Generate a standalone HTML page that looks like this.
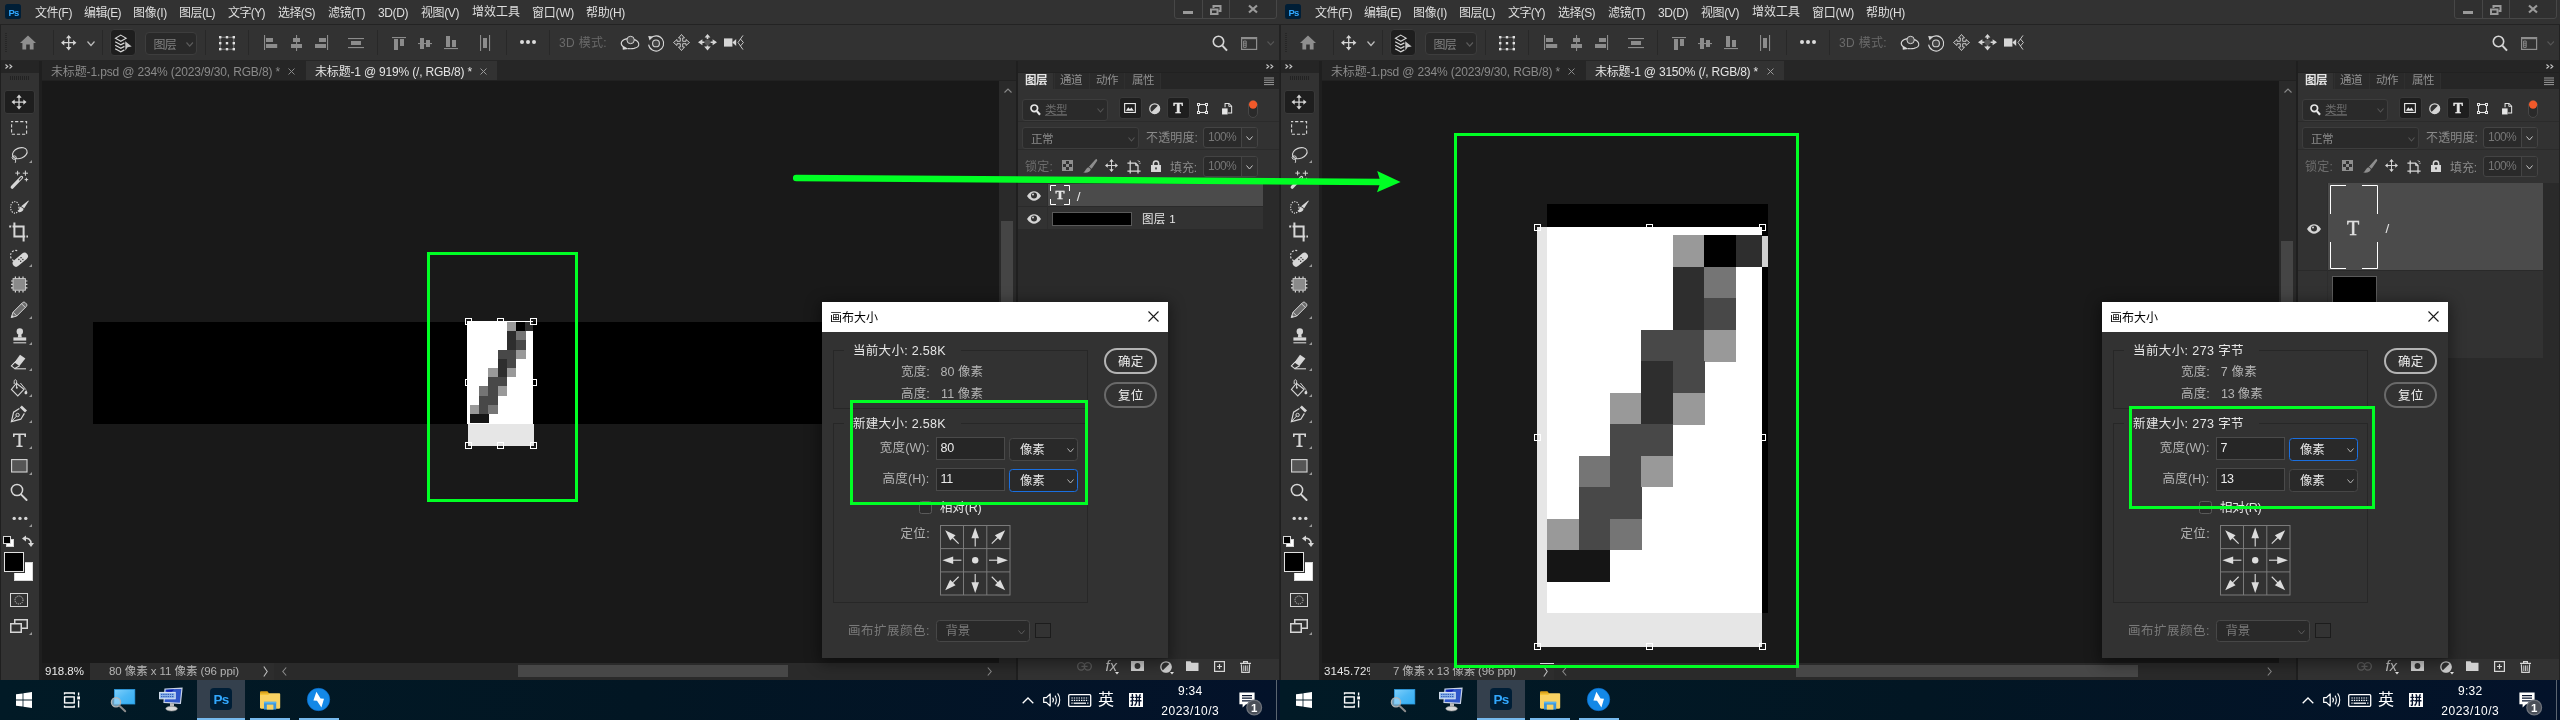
<!DOCTYPE html><html lang="zh-CN"><head><meta charset="utf-8"><title>Photoshop canvas size</title><style>html,body{margin:0;padding:0;background:#191919;}
body{width:2560px;height:720px;position:relative;overflow:hidden;font-family:"Liberation Sans","Noto Sans CJK SC",sans-serif;}
.shot{position:absolute;top:0;width:1280px;height:720px;overflow:hidden;background:#191919;will-change:transform;}
.shot div,.shot svg,.shot span.t,.ov{position:absolute;box-sizing:border-box;}
span.t{white-space:pre;display:block;}
svg{overflow:visible;display:block;}
</style></head><body><div class="shot" style="left:0"><div style="left:93px;top:322px;width:735px;height:101.5px;background:#000;"></div><div style="left:467px;top:321px;width:66px;height:103px;background:#fff;"></div><div style="left:468px;top:423.5px;width:66px;height:22px;background:#e6e6e6;"></div><svg style="left:0px;top:0px;" width="1280" height="720" viewBox="0 0 1280 720"><g shape-rendering="crispEdges"><rect x="506.86" y="322.00" width="9.49" height="9.49" fill="#999"/><rect x="516.05" y="322.00" width="9.49" height="9.49" fill="#000"/><rect x="525.24" y="322.00" width="8.06" height="9.49" fill="#2e2e2e"/><rect x="506.86" y="331.19" width="9.49" height="9.49" fill="#2e2e2e"/><rect x="516.05" y="331.19" width="9.49" height="9.49" fill="#757575"/><rect x="506.86" y="340.38" width="9.49" height="9.49" fill="#2e2e2e"/><rect x="516.05" y="340.38" width="9.49" height="9.49" fill="#484848"/><rect x="497.67" y="349.56" width="9.49" height="9.49" fill="#484848"/><rect x="506.86" y="349.56" width="9.49" height="9.49" fill="#484848"/><rect x="516.05" y="349.56" width="9.49" height="9.49" fill="#999"/><rect x="497.67" y="358.75" width="9.49" height="9.49" fill="#2e2e2e"/><rect x="506.86" y="358.75" width="9.49" height="9.49" fill="#484848"/><rect x="488.48" y="367.94" width="9.49" height="9.49" fill="#999"/><rect x="497.67" y="367.94" width="9.49" height="9.49" fill="#2e2e2e"/><rect x="506.86" y="367.94" width="9.49" height="9.49" fill="#999"/><rect x="488.48" y="377.13" width="9.49" height="9.49" fill="#484848"/><rect x="497.67" y="377.13" width="9.49" height="9.49" fill="#484848"/><rect x="479.30" y="386.32" width="9.49" height="9.49" fill="#757575"/><rect x="488.48" y="386.32" width="9.49" height="9.49" fill="#484848"/><rect x="497.67" y="386.32" width="9.49" height="9.49" fill="#999"/><rect x="479.30" y="395.50" width="9.49" height="9.49" fill="#484848"/><rect x="488.48" y="395.50" width="9.49" height="9.49" fill="#484848"/><rect x="470.11" y="404.69" width="9.49" height="9.49" fill="#999"/><rect x="479.30" y="404.69" width="9.49" height="9.49" fill="#484848"/><rect x="488.48" y="404.69" width="9.49" height="9.49" fill="#757575"/><rect x="470.11" y="413.88" width="9.49" height="9.49" fill="#151515"/><rect x="479.30" y="413.88" width="9.49" height="9.49" fill="#151515"/></g></svg><div style="left:465px;top:318px;width:7px;height:7px;border:1px solid #fff;background:transparent;"></div><div style="left:497px;top:318px;width:7px;height:7px;border:1px solid #fff;background:transparent;"></div><div style="left:530px;top:318px;width:7px;height:7px;border:1px solid #fff;background:transparent;"></div><div style="left:465px;top:379px;width:7px;height:7px;border:1px solid #fff;background:transparent;"></div><div style="left:530px;top:379px;width:7px;height:7px;border:1px solid #fff;background:transparent;"></div><div style="left:465px;top:442px;width:7px;height:7px;border:1px solid #fff;background:transparent;"></div><div style="left:497px;top:442px;width:7px;height:7px;border:1px solid #fff;background:transparent;"></div><div style="left:530px;top:442px;width:7px;height:7px;border:1px solid #fff;background:transparent;"></div><div style="left:0px;top:0px;width:1280px;height:24px;background:#323232;"></div><div style="left:0px;top:24px;width:1280px;height:1px;background:#232323;"></div><div style="left:5px;top:4px;width:16px;height:15px;background:#001e36;border-radius:2.5px;"></div><span id="t1" class="t" style="left:8.5px;top:5px;font-size:9.5px;line-height:15px;color:#31a8ff;letter-spacing:-0.812px;font-weight:bold;">Ps</span><span id="t2" class="t" style="left:35px;top:4px;font-size:12px;line-height:19px;color:#dedede;letter-spacing:-0.466px;">文件(F)</span><span id="t3" class="t" style="left:84px;top:4px;font-size:12px;line-height:19px;color:#dedede;letter-spacing:-0.600px;">编辑(E)</span><span id="t4" class="t" style="left:133px;top:4px;font-size:12px;line-height:19px;color:#dedede;letter-spacing:-0.266px;">图像(I)</span><span id="t5" class="t" style="left:179px;top:4px;font-size:12px;line-height:19px;color:#dedede;letter-spacing:-0.534px;">图层(L)</span><span id="t6" class="t" style="left:228px;top:4px;font-size:12px;line-height:19px;color:#dedede;letter-spacing:-0.600px;">文字(Y)</span><span id="t7" class="t" style="left:278px;top:4px;font-size:12px;line-height:19px;color:#dedede;letter-spacing:-0.600px;">选择(S)</span><span id="t8" class="t" style="left:328px;top:4px;font-size:12px;line-height:19px;color:#dedede;letter-spacing:-0.466px;">滤镜(T)</span><span id="t9" class="t" style="left:378px;top:4px;font-size:12px;line-height:19px;color:#dedede;letter-spacing:-0.400px;">3D(D)</span><span id="t10" class="t" style="left:421px;top:4px;font-size:12px;line-height:19px;color:#dedede;letter-spacing:-0.400px;">视图(V)</span><span id="t11" class="t" style="left:472px;top:3px;font-size:12px;line-height:19px;color:#dedede;letter-spacing:-0.004px;">增效工具</span><span id="t12" class="t" style="left:532px;top:4px;font-size:12px;line-height:19px;color:#dedede;letter-spacing:-0.266px;">窗口(W)</span><span id="t13" class="t" style="left:586px;top:4px;font-size:12px;line-height:19px;color:#dedede;letter-spacing:-0.334px;">帮助(H)</span><div style="left:1174px;top:-1px;width:103px;height:20px;border:1px solid #474747;border-radius:0 0 3px 3px;background:#303030;"></div><div style="left:1202px;top:0px;width:1px;height:18px;background:#474747;"></div><div style="left:1229px;top:0px;width:1px;height:18px;background:#474747;"></div><div style="left:1183px;top:11px;width:10px;height:3px;background:#9a9a9a;"></div><svg style="left:1210px;top:5px;" width="12" height="10" viewBox="0 0 12 10"><path d="M3.5 3V1h7v5h-2" fill="none" stroke="#9a9a9a" stroke-width="2"/><rect x="1" y="4.5" width="6.5" height="4.5" fill="none" stroke="#9a9a9a" stroke-width="2"/></svg><svg style="left:1248px;top:5px;" width="10" height="8" viewBox="0 0 10 8"><path d="M1 0.5L9 7.5M9 0.5L1 7.5" stroke="#9a9a9a" stroke-width="2.2" fill="none"/></svg><div style="left:0px;top:25px;width:1280px;height:35px;background:#323232;"></div><div style="left:0px;top:60px;width:1280px;height:1px;background:#262626;"></div><div style="left:0px;top:25px;width:1px;height:36px;background:#222;"></div><div style="left:5px;top:33px;width:2px;height:20px;background:repeating-linear-gradient(#262626 0 1px,transparent 1px 2px);"></div><svg style="left:20px;top:35.2px;" width="16.2" height="15" viewBox="0 0 16.2 15"><path d="M8 0.5 L16 8 H13.6 V14.5 H9.8 V9.6 H6.2 V14.5 H2.4 V8 H0 Z" fill="#8e8e8e"/></svg><div style="left:53px;top:30px;width:1px;height:25px;background:#282828;"></div><svg style="left:60.9px;top:35px;" width="15.4" height="15.4" viewBox="0 0 16 16"><g fill="none" stroke="#d6d6d6" stroke-width="1.3"><path d="M8 1.5V14.5M1.5 8H14.5"/></g><path d="M8 0L10.8 3.4H5.2ZM8 16L10.8 12.6H5.2ZM0 8L3.4 5.2V10.8ZM16 8L12.6 5.2V10.8Z" fill="#d6d6d6"/></svg><svg style="left:87px;top:41px;" width="8" height="5" viewBox="0 0 8 5"><path d="M0.5 0.5L4.0 4.5L7.5 0.5" fill="none" stroke="#bdbdbd" stroke-width="1.2"/></svg><div style="left:102px;top:30px;width:1px;height:25px;background:#282828;"></div><div style="left:110px;top:29px;width:26px;height:27px;background:#1e1e1e;border-radius:4px;border:1px solid #393939;"></div><svg style="left:114px;top:34px;" width="20" height="18" viewBox="0 0 20 18"><path d="M6.8 1.1L12.2 4.2L6.8 7.3L1.4 4.2Z" fill="none" stroke="#d6d6d6" stroke-width="1.05"/><path d="M1.2 7.7L6.8 10.9L10.4 8.9" fill="none" stroke="#d6d6d6" stroke-width="1.25"/><path d="M1.2 11.2L6.8 14.4L10.4 12.4" fill="none" stroke="#d6d6d6" stroke-width="1.25"/><path d="M1.2 14.7L6.8 17.9L10.4 15.9" fill="none" stroke="#d6d6d6" stroke-width="1.25"/><path d="M11.2 7.2L17.7 12.5L13.6 13.2L11.4 16.4Z" fill="#c8c8c8"/></svg><div style="left:144.6px;top:32.2px;width:52px;height:22.6px;background:#292929;border:1px solid #3d3d3d;border-radius:4px;"></div><span id="t14" class="t" style="left:153.5px;top:35.5px;font-size:12px;line-height:19px;color:#808080;letter-spacing:-0.758px;">图层</span><svg style="left:186px;top:42.3px;" width="7.4" height="4.6" viewBox="0 0 7.4 4.6"><path d="M0.5 0.5L3.7 4.1L6.9 0.5" fill="none" stroke="#5c5c5c" stroke-width="1.2"/></svg><div style="left:205px;top:30px;width:1px;height:25px;background:#282828;"></div><svg style="left:218.8px;top:36px;" width="16" height="14.4" viewBox="0 0 16 14.4"><rect x="1.2" y="1.2" width="13.6" height="12" fill="none" stroke="#8a8a8a" stroke-width="0.8"/><rect x="0" y="0" width="2.4" height="2.4" fill="#e0e0e0"/><rect x="0" y="6" width="2.4" height="2.4" fill="#e0e0e0"/><rect x="0" y="12" width="2.4" height="2.4" fill="#e0e0e0"/><rect x="6.8" y="0" width="2.4" height="2.4" fill="#e0e0e0"/><rect x="6.8" y="6" width="2.4" height="2.4" fill="#e0e0e0"/><rect x="6.8" y="12" width="2.4" height="2.4" fill="#e0e0e0"/><rect x="13.6" y="0" width="2.4" height="2.4" fill="#e0e0e0"/><rect x="13.6" y="6" width="2.4" height="2.4" fill="#e0e0e0"/><rect x="13.6" y="12" width="2.4" height="2.4" fill="#e0e0e0"/></svg><div style="left:248px;top:30px;width:1px;height:25px;background:#282828;"></div><svg style="left:0px;top:0px;" width="600" height="60" viewBox="0 0 600 60"><rect x="264" y="35" width="1.1" height="15" fill="#8c8c8c"/><rect x="266" y="38" width="7" height="4" fill="#8c8c8c"/><rect x="266" y="44" width="11.2" height="4" fill="#8c8c8c"/><rect x="296" y="35" width="1.1" height="16" fill="#8c8c8c"/><rect x="293" y="38" width="7" height="4" fill="#8c8c8c"/><rect x="291" y="44" width="11" height="4" fill="#8c8c8c"/><rect x="327" y="35" width="1.1" height="15" fill="#8c8c8c"/><rect x="319" y="38" width="7" height="4" fill="#8c8c8c"/><rect x="315" y="44" width="11" height="4" fill="#8c8c8c"/><rect x="348" y="38" width="16" height="1.1" fill="#8c8c8c"/><rect x="351" y="41" width="10" height="4" fill="#8c8c8c"/><rect x="348" y="47" width="16" height="1.1" fill="#8c8c8c"/><rect x="392" y="37" width="14" height="1.1" fill="#8c8c8c"/><rect x="394" y="39" width="4" height="11" fill="#8c8c8c"/><rect x="400" y="39" width="4" height="7" fill="#8c8c8c"/><rect x="418" y="43" width="14" height="1.1" fill="#8c8c8c"/><rect x="420" y="38" width="4" height="11" fill="#8c8c8c"/><rect x="426" y="40" width="4" height="7" fill="#8c8c8c"/><rect x="444" y="48" width="14" height="1.1" fill="#8c8c8c"/><rect x="446" y="36" width="4" height="11" fill="#8c8c8c"/><rect x="452" y="40" width="4" height="7" fill="#8c8c8c"/><rect x="480" y="35" width="1.1" height="16" fill="#8c8c8c"/><rect x="483" y="38" width="4" height="10" fill="#8c8c8c"/><rect x="489" y="35" width="1.1" height="16" fill="#8c8c8c"/></svg><div style="left:377px;top:30px;width:1px;height:25px;background:#282828;"></div><div style="left:506px;top:30px;width:1px;height:25px;background:#282828;"></div><svg style="left:519px;top:39px;" width="18" height="6" viewBox="0 0 18 6"><circle cx="3" cy="3.1" r="2" fill="#dcdcdc"/><circle cx="9" cy="3.1" r="2" fill="#dcdcdc"/><circle cx="15" cy="3.1" r="2" fill="#dcdcdc"/></svg><div style="left:549px;top:30px;width:1px;height:25px;background:#282828;"></div><span id="t15" class="t" style="left:559px;top:34px;font-size:12px;line-height:19px;color:#6a6a6a;letter-spacing:0.331px;">3D 模式:</span><svg style="left:620px;top:35.4px;" width="20" height="16" viewBox="0 0 20 16"><path d="M7.4 3.6C1.6 4.4 -0.6 8.4 3 11.6M13.6 4.4C19.4 6 21.4 11.6 14 13.4C11.6 13.9 9.6 13.8 8 13.6" fill="none" stroke="#d6d6d6" stroke-width="1.1"/><circle cx="10.6" cy="5" r="3.7" fill="#4a4a4a" stroke="#d6d6d6" stroke-width="1"/><path d="M2.6 10.4L8.6 14L2.8 14.8Z" fill="#d6d6d6"/></svg><svg style="left:647px;top:34px;" width="18" height="18" viewBox="0 0 18 18"><circle cx="9" cy="9.4" r="3.4" fill="#444" stroke="#d6d6d6" stroke-width="1.1"/><path d="M3.6 4.2A7.6 7.6 0 1 1 1.6 10.6" fill="none" stroke="#d6d6d6" stroke-width="1.1"/><path d="M1.2 2L6 2.6L2.6 6.6Z" fill="#d6d6d6"/></svg><svg style="left:673px;top:34px;" width="17" height="17" viewBox="0 0 17 17"><path d="M8.5 0.5L5.5 4H7.3V7.3H4V5.5L0.5 8.5L4 11.5V9.7H7.3V13H5.5L8.5 16.5L11.5 13H9.7V9.7H13V11.5L16.5 8.5L13 5.5V7.3H9.7V4H11.5Z" fill="#3a3a3a" stroke="#d6d6d6" stroke-width="0.9" stroke-linejoin="round"/></svg><svg style="left:698px;top:34px;" width="19" height="17" viewBox="0 0 19 17"><circle cx="9.5" cy="8.2" r="2.8" fill="#555"/><path d="M9.5 0L12.4 3.6H6.6ZM9.5 16.6L12.8 12.6H6.2ZM0 8.2L4.4 5.2V11.2ZM19 8.2L14.6 5.2V11.2Z" fill="#d6d6d6"/><path d="M9.5 3V5M9.5 11.4V13M4 8.2H6.4M12.6 8.2H15" stroke="#d6d6d6" stroke-width="1.6"/></svg><svg style="left:724px;top:35px;" width="20" height="15" viewBox="0 0 20 15"><rect x="0" y="3.4" width="8.4" height="8.2" fill="#d6d6d6"/><path d="M8.4 7.5L12.2 4V11Z" fill="#d6d6d6"/><path d="M19 0.4L14 7.5L19 14.6M16.4 4L19.4 7.5L16.4 11" fill="none" stroke="#d6d6d6" stroke-width="0.9"/></svg><svg style="left:1211.8px;top:35.2px;" width="16" height="17" viewBox="0 0 16 17"><circle cx="6.5" cy="6.5" r="5.2" fill="none" stroke="#d6d6d6" stroke-width="1.6"/><path d="M10.4 10.6L15 15.6" stroke="#d6d6d6" stroke-width="2" /></svg><svg style="left:1241px;top:37px;" width="17" height="14" viewBox="0 0 17 14"><rect x="0.6" y="0.6" width="15" height="11.8" fill="none" stroke="#8e8e8e" stroke-width="1.2"/><path d="M2.6 4h2.6v6.4h-2.6zM2.6 6.2h2.6M2.6 8.2h2.6" stroke="#8e8e8e" stroke-width="0.9" fill="none"/><path d="M0.6 1.4h15" stroke="#8e8e8e" stroke-width="1.6"/></svg><svg style="left:1266.8px;top:40.6px;" width="7.4" height="4.4" viewBox="0 0 7.4 4.4"><path d="M0.5 0.5L3.7 3.9000000000000004L6.9 0.5" fill="none" stroke="#555" stroke-width="1.1"/></svg><div style="left:0px;top:61px;width:1280px;height:20px;background:#262626;"></div><div style="left:0px;top:80px;width:1280px;height:1px;background:#212121;"></div><div style="left:42px;top:61px;width:264px;height:19px;background:#262626;"></div><span id="t16" class="t" style="left:51px;top:63px;font-size:12px;line-height:19px;color:#8a8a8a;letter-spacing:-0.143px;">未标题-1.psd @ 234% (2023/9/30, RGB/8) *</span><svg style="left:288px;top:68px;" width="7" height="7" viewBox="0 0 7 7"><path d="M0.5 0.5L6.5 6.5M6.5 0.5L0.5 6.5" stroke="#8a8a8a" stroke-width="1" fill="none"/></svg><div style="left:306px;top:61px;width:191px;height:19px;background:#323232;"></div><span id="t17" class="t" style="left:315px;top:63px;font-size:12px;line-height:19px;color:#e4e4e4;letter-spacing:-0.182px;">未标题-1 @ 919% (/, RGB/8) *</span><svg style="left:480px;top:68px;" width="7" height="7" viewBox="0 0 7 7"><path d="M0.5 0.5L6.5 6.5M6.5 0.5L0.5 6.5" stroke="#9a9a9a" stroke-width="1" fill="none"/></svg><div style="left:0px;top:61px;width:42px;height:620px;background:#1f1f1f;"></div><div style="left:1px;top:61px;width:38px;height:12px;background:#252525;"></div><div style="left:1px;top:73px;width:38px;height:607px;background:#323232;"></div><svg style="left:5px;top:64px;" width="8" height="5" viewBox="0 0 8 5"><path d="M0.5 0.5L2.8 2.5L0.5 4.5M4.5 0.5L6.8 2.5L4.5 4.5" fill="none" stroke="#c8c8c8" stroke-width="1.1"/></svg><div style="left:10px;top:76px;width:20px;height:4px;background:repeating-linear-gradient(90deg,#222 0 1px,transparent 1px 2px);"></div><div style="left:4px;top:90px;width:31px;height:24px;background:#1e1e1e;border-radius:3px;border:1px solid #393939;"></div><svg style="left:9px;top:92px;" width="20" height="20" viewBox="0 0 20 20"><g transform="translate(2.5 2.5) scale(0.94)"><g fill="none" stroke="#d6d6d6" stroke-width="1.35"><path d="M8 1.5V14.5M1.5 8H14.5"/></g><path d="M8 0L10.8 3.4H5.2ZM8 16L10.8 12.6H5.2ZM0 8L3.4 5.2V10.8ZM16 8L12.6 5.2V10.8Z" fill="#d6d6d6"/></g></svg><svg style="left:9px;top:118px;" width="20" height="20" viewBox="0 0 20 20"><rect x="2.6" y="3.6" width="15" height="12.6" fill="none" stroke="#d6d6d6" stroke-width="1.1" stroke-dasharray="3.2 1.9" stroke-dashoffset="1.6"/></svg><svg style="left:9px;top:144px;" width="20" height="20" viewBox="0 0 20 20"><ellipse cx="10.8" cy="9.2" rx="7.6" ry="5.2" transform="rotate(-22 10.8 9.2)" fill="none" stroke="#d6d6d6" stroke-width="1.1"/><ellipse cx="5.2" cy="13.6" rx="2.1" ry="1.7" fill="none" stroke="#d6d6d6" stroke-width="1"/><path d="M6 15C6.8 16.4 6.8 17.6 6.2 18.8" fill="none" stroke="#d6d6d6" stroke-width="1"/></svg><svg style="left:29px;top:160px;" width="3" height="3" viewBox="0 0 3 3"><path d="M3 0V3H0Z" fill="#9a9a9a"/></svg><svg style="left:9px;top:170px;" width="20" height="20" viewBox="0 0 20 20"><path d="M3.2 17.2L12.6 7.4" stroke="#d6d6d6" stroke-width="3.2" stroke-linecap="round"/><path d="M10.4 9.8L12.4 7.7" stroke="#323232" stroke-width="1.2" stroke-linecap="round"/><path d="M8.6 0.8V5.4M6.3 3.1H10.9M16.4 0.6V5.8M13.8 3.2H19M17.4 7.8V11.4M15.6 9.6H19.2" stroke="#d6d6d6" stroke-width="1" /></svg><svg style="left:9px;top:196px;" width="20" height="20" viewBox="0 0 20 20"><ellipse cx="5.8" cy="11.4" rx="4.2" ry="5.8" fill="none" stroke="#d6d6d6" stroke-width="1.2" stroke-dasharray="1.2 1.3"/><path d="M19.4 4.6L19.8 5L15.2 12.2L12.2 10.2Z" fill="#d6d6d6"/><path d="M11.6 10.8L14.6 12.8C14.4 15.6 11.4 16.6 8.6 16C10.4 15 9.8 12 11.6 10.8Z" fill="#d6d6d6"/></svg><svg style="left:9px;top:222px;" width="20" height="20" viewBox="0 0 20 20"><path d="M5.4 0.4V14.4H19" fill="none" stroke="#d6d6d6" stroke-width="2"/><path d="M0.2 4.6H14.6V19.4" fill="none" stroke="#d6d6d6" stroke-width="2"/><rect x="2.2" y="3.2" width="1.4" height="3" fill="#323232"/><rect x="16.2" y="13" width="1.2" height="3" fill="#323232"/></svg><svg style="left:9px;top:248px;" width="20" height="20" viewBox="0 0 20 20"><path d="M8.2 2.6A5.2 5.2 0 1 0 5.4 12.8" fill="none" stroke="#d6d6d6" stroke-width="1.1" stroke-dasharray="2 1.4"/><rect x="2.4" y="8.2" width="17.8" height="7" rx="3.5" transform="rotate(-40 11.3 11.7)" fill="#d6d6d6"/><g fill="#323232"><rect x="9.2" y="10.8" width="1.3" height="1.3"/><rect x="11.4" y="9" width="1.3" height="1.3"/><rect x="11" y="12.6" width="1.3" height="1.3"/><rect x="13.2" y="10.8" width="1.3" height="1.3"/></g></svg><svg style="left:29px;top:264px;" width="3" height="3" viewBox="0 0 3 3"><path d="M3 0V3H0Z" fill="#9a9a9a"/></svg><svg style="left:9px;top:274px;" width="20" height="20" viewBox="0 0 20 20"><rect x="4" y="4.6" width="12.4" height="11.6" fill="#8a8a8a" stroke="#d6d6d6" stroke-width="0.8"/><path d="M6.4 2.4V4.4M6.4 16.4V18.4" stroke="#d6d6d6" stroke-width="1.2"/><path d="M10.2 2.4V4.4M10.2 16.4V18.4" stroke="#d6d6d6" stroke-width="1.2"/><path d="M14 2.4V4.4M14 16.4V18.4" stroke="#d6d6d6" stroke-width="1.2"/><path d="M2 7H4M16.4 7H18.4" stroke="#d6d6d6" stroke-width="1.2"/><path d="M2 10.4H4M16.4 10.4H18.4" stroke="#d6d6d6" stroke-width="1.2"/><path d="M2 13.8H4M16.4 13.8H18.4" stroke="#d6d6d6" stroke-width="1.2"/></svg><svg style="left:9px;top:300px;" width="20" height="20" viewBox="0 0 20 20"><path d="M2.2 17.6L4 12.2L13.4 2.8C14.4 1.8 15.6 2 16.4 2.8L17.2 3.6C18 4.4 18.2 5.6 17.2 6.6L7.8 16Z" fill="#6c6c6c" stroke="#d6d6d6" stroke-width="1"/><path d="M4 12.2L7.8 16M12.6 3.8L16.2 7.4" stroke="#d6d6d6" stroke-width="0.9"/><path d="M2.2 17.6L3 15L4.8 16.8Z" fill="#d6d6d6"/></svg><svg style="left:29px;top:316px;" width="3" height="3" viewBox="0 0 3 3"><path d="M3 0V3H0Z" fill="#9a9a9a"/></svg><svg style="left:9px;top:326px;" width="20" height="20" viewBox="0 0 20 20"><circle cx="10.8" cy="5.4" r="3.2" fill="#d6d6d6"/><path d="M9.4 7.6H12.2L12.8 11.6H8.8Z" fill="#d6d6d6"/><path d="M4.4 11.4H17.2V14.6H4.4Z" fill="#d6d6d6"/><path d="M4.4 16.8H17.2" stroke="#d6d6d6" stroke-width="1.1"/></svg><svg style="left:29px;top:342px;" width="3" height="3" viewBox="0 0 3 3"><path d="M3 0V3H0Z" fill="#9a9a9a"/></svg><svg style="left:9px;top:352px;" width="20" height="20" viewBox="0 0 20 20"><path d="M2.6 13.6L11.6 4.4" stroke="#d6d6d6" stroke-width="1"/><path d="M11 2.8L16.4 6.4L10.4 14L5.4 10.4Z" fill="#d6d6d6"/><path d="M6 10L2.4 14L5.8 16.6L10.6 13.8" fill="none" stroke="#d6d6d6" stroke-width="1.1"/><path d="M5.8 16.8H17" stroke="#d6d6d6" stroke-width="1.1"/></svg><svg style="left:29px;top:368px;" width="3" height="3" viewBox="0 0 3 3"><path d="M3 0V3H0Z" fill="#9a9a9a"/></svg><svg style="left:9px;top:378px;" width="20" height="20" viewBox="0 0 20 20"><path d="M7.4 5.2L15 11.4L8.8 18L2.4 11.4Z" fill="none" stroke="#d6d6d6" stroke-width="1.1"/><path d="M7.6 9.4V3.4C7.4 1.2 5.2 1.2 5.2 3.4V6" fill="none" stroke="#d6d6d6" stroke-width="1"/><circle cx="7.8" cy="9.8" r="1" fill="#d6d6d6"/><path d="M11.4 5L16.8 11.6" stroke="#d6d6d6" stroke-width="1"/><path d="M17.2 12C18.6 14 18.8 15.4 17.6 16.2C16.4 16.8 15 15.6 15.6 14C16 13 16.8 12.8 17.2 12Z" fill="#d6d6d6"/></svg><svg style="left:29px;top:394px;" width="3" height="3" viewBox="0 0 3 3"><path d="M3 0V3H0Z" fill="#9a9a9a"/></svg><svg style="left:9px;top:404px;" width="20" height="20" viewBox="0 0 20 20"><path d="M12.8 1.6L18 6.6L16 8.6L10.8 3.6Z" fill="#d6d6d6"/><path d="M10.4 4.4L4.6 8.2L2.4 17.6L11.8 15.2L15.4 9.4" fill="none" stroke="#d6d6d6" stroke-width="1.2"/><path d="M2.6 17.4L8 11.6" stroke="#d6d6d6" stroke-width="1"/><circle cx="8.6" cy="11" r="1.7" fill="none" stroke="#d6d6d6" stroke-width="1"/></svg><svg style="left:29px;top:420px;" width="3" height="3" viewBox="0 0 3 3"><path d="M3 0V3H0Z" fill="#9a9a9a"/></svg><svg style="left:9px;top:430px;" width="20" height="20" viewBox="0 0 20 20"><path d="M4 3.4H17V7H15.6L15.2 5H11.6V15.4L13.6 15.8V17H7.4V15.8L9.4 15.4V5H5.8L5.4 7H4Z" fill="#d6d6d6"/></svg><svg style="left:29px;top:446px;" width="3" height="3" viewBox="0 0 3 3"><path d="M3 0V3H0Z" fill="#9a9a9a"/></svg><svg style="left:9px;top:456px;" width="20" height="20" viewBox="0 0 20 20"><rect x="2.6" y="3.6" width="15.4" height="12.4" fill="#555" stroke="#d6d6d6" stroke-width="1.1"/></svg><svg style="left:29px;top:472px;" width="3" height="3" viewBox="0 0 3 3"><path d="M3 0V3H0Z" fill="#9a9a9a"/></svg><svg style="left:9px;top:482px;" width="20" height="20" viewBox="0 0 20 20"><circle cx="8" cy="8" r="5.6" fill="none" stroke="#d6d6d6" stroke-width="1.5"/><path d="M12 12.4L17.6 18" stroke="#d6d6d6" stroke-width="1.9" stroke-linecap="round"/></svg><svg style="left:9px;top:508px;" width="20" height="20" viewBox="0 0 20 20"><circle cx="5.2" cy="10.4" r="1.7" fill="#d6d6d6"/><circle cx="11" cy="10.4" r="1.7" fill="#d6d6d6"/><circle cx="16.8" cy="10.4" r="1.7" fill="#d6d6d6"/></svg><svg style="left:29px;top:524px;" width="3" height="3" viewBox="0 0 3 3"><path d="M3 0V3H0Z" fill="#9a9a9a"/></svg><svg style="left:3px;top:536px;" width="12" height="12" viewBox="0 0 12 12"><rect x="3.5" y="3.5" width="7" height="7" fill="#fff" stroke="#d6d6d6"/><rect x="0.5" y="0.5" width="7" height="7" fill="#000" stroke="#d6d6d6"/></svg><svg style="left:22px;top:535px;" width="12" height="12" viewBox="0 0 12 12"><path d="M2 3.5C6 2.5 9 4.5 9 8.5" fill="none" stroke="#d6d6d6" stroke-width="1.6"/><path d="M0 3.6L4 0.6V6.4Z M9 12L6 8H12Z" fill="#d6d6d6"/></svg><div style="left:14px;top:562px;width:19px;height:19px;background:#fff;border:1px solid #d6d6d6;"></div><div style="left:4px;top:552px;width:20px;height:20px;background:#000;border:1px solid #e0e0e0;outline:1px solid #323232;"></div><svg style="left:10px;top:593px;" width="18" height="14" viewBox="0 0 18 14"><rect x="0.5" y="0.5" width="17" height="13" fill="none" stroke="#d6d6d6"/><circle cx="9" cy="7" r="4" fill="none" stroke="#d6d6d6" stroke-dasharray="1 1"/></svg><svg style="left:10px;top:619px;" width="18" height="15" viewBox="0 0 18 15"><rect x="4.75" y="0.75" width="12.5" height="8.5" fill="none" stroke="#d6d6d6" stroke-width="1.5"/><rect x="0.75" y="4.75" width="10.5" height="8.5" fill="#323232" stroke="#d6d6d6" stroke-width="1.5"/></svg><svg style="left:29px;top:632px;" width="3" height="3" viewBox="0 0 3 3"><path d="M3 0V3H0Z" fill="#9a9a9a"/></svg><div style="left:42px;top:663px;width:974px;height:17px;background:#2a2a2a;"></div><div style="left:42px;top:663px;width:48px;height:17px;background:#1d1d1d;"></div><div style="left:90px;top:663px;width:184px;height:17px;background:#2d2d2d;"></div><span id="t18" class="t" style="left:45px;top:662px;font-size:11.5px;line-height:18px;color:#e8e8e8;letter-spacing:-0.003px;">918.8%</span><span id="t19" class="t" style="left:109px;top:662px;font-size:11.5px;line-height:18px;color:#b4b4b4;letter-spacing:-0.066px;">80 像素 x 11 像素 (96 ppi)</span><svg style="left:263px;top:666px;" width="5" height="11" viewBox="0 0 5 11"><path d="M0.8 0.5L4.2 5.5L0.8 10.5" fill="none" stroke="#bdbdbd" stroke-width="1.1"/></svg><svg style="left:282px;top:667px;" width="5" height="9" viewBox="0 0 5 9"><path d="M4.2 0.5L0.8 4.5L4.2 8.5" fill="none" stroke="#8a8a8a" stroke-width="1.1"/></svg><svg style="left:987px;top:667px;" width="5" height="9" viewBox="0 0 5 9"><path d="M0.8 0.5L4.2 4.5L0.8 8.5" fill="none" stroke="#8a8a8a" stroke-width="1.1"/></svg><div style="left:518px;top:665px;width:270px;height:12px;background:#474747;"></div><div style="left:999px;top:81px;width:17px;height:582px;background:#2a2a2a;"></div><svg style="left:1004px;top:88px;" width="8" height="5" viewBox="0 0 8 5"><path d="M0.5 4.5L4 1L7.5 4.5" fill="none" stroke="#8a8a8a" stroke-width="1.1"/></svg><div style="left:1001px;top:221px;width:12px;height:110px;background:#454545;"></div><div style="left:1016px;top:61px;width:264px;height:620px;background:#1f1f1f;"></div><div style="left:1018px;top:61px;width:262px;height:12px;background:#252525;"></div><div style="left:1018px;top:73px;width:262px;height:16px;background:#262626;"></div><div style="left:1053px;top:73px;width:108px;height:16px;background:#2a2a2a;"></div><div style="left:1018px;top:72px;width:262px;height:1px;background:#212121;"></div><div style="left:1018px;top:89px;width:262px;height:591px;background:#323232;"></div><svg style="left:1266px;top:64px;" width="8" height="5" viewBox="0 0 8 5"><path d="M0.5 0.5L2.8 2.5L0.5 4.5M4.5 0.5L6.8 2.5L4.5 4.5" fill="none" stroke="#c8c8c8" stroke-width="1.1"/></svg><div style="left:1018px;top:73px;width:35px;height:17px;background:#323232;"></div><span id="t20" class="t" style="left:1025px;top:71px;font-size:11.5px;line-height:18px;color:#e6e6e6;letter-spacing:-0.500px;font-weight:bold;">图层</span><span id="t21" class="t" style="left:1060px;top:71px;font-size:11.5px;line-height:18px;color:#8f8f8f;letter-spacing:-0.500px;">通道</span><span id="t22" class="t" style="left:1096px;top:71px;font-size:11.5px;line-height:18px;color:#8f8f8f;letter-spacing:-0.500px;">动作</span><span id="t23" class="t" style="left:1132px;top:71px;font-size:11.5px;line-height:18px;color:#8f8f8f;letter-spacing:-0.500px;">属性</span><div style="left:1054px;top:73px;width:1px;height:16px;background:#2f2f2f;"></div><div style="left:1089px;top:73px;width:1px;height:16px;background:#2f2f2f;"></div><div style="left:1124px;top:73px;width:1px;height:16px;background:#2f2f2f;"></div><div style="left:1160px;top:73px;width:1px;height:16px;background:#2f2f2f;"></div><svg style="left:1264px;top:77px;" width="10" height="8" viewBox="0 0 10 8"><path d="M0 1h10M0 3.2h10M0 5.4h10M0 7.6h10" stroke="#9a9a9a" stroke-width="1"/></svg><div style="left:1018px;top:120.5px;width:262px;height:1px;background:#2b2b2b;"></div><div style="left:1022px;top:99px;width:86px;height:22px;background:#2a2a2a;border:1px solid #3d3d3d;border-radius:3px;"></div><svg style="left:1030px;top:104px;" width="11" height="12" viewBox="0 0 11 12"><circle cx="4.3" cy="4.3" r="3.3" fill="none" stroke="#e6e6e6" stroke-width="1.7"/><path d="M6.8 7L10 10.8" stroke="#e6e6e6" stroke-width="2.1"/></svg><span id="t24" class="t" style="left:1045px;top:100.5px;font-size:11.5px;line-height:18px;color:#6e6e6e;letter-spacing:-0.500px;text-decoration:underline;text-decoration-color:#555;">类型</span><svg style="left:1097px;top:108px;" width="7" height="4" viewBox="0 0 7 4"><path d="M0.5 0.5L3.5 4.0L6.5 0.5" fill="none" stroke="#555" stroke-width="1.1"/></svg><div style="left:1119px;top:97px;width:23px;height:22px;background:#1e1e1e;border-radius:3px;border:1px solid #393939;"></div><svg style="left:1124px;top:103px;" width="12" height="10" viewBox="0 0 13 11"><rect x="0.6" y="0.6" width="11.8" height="9.8" fill="none" stroke="#e6e6e6" stroke-width="1.2"/><path d="M2 8.6L4.6 4.6L6.4 7L8 5L10.8 8.6Z" fill="#e6e6e6"/></svg><svg style="left:1148.8px;top:102.8px;" width="11.4" height="11.4" viewBox="0 0 12 12"><circle cx="6" cy="6" r="5.2" fill="none" stroke="#d6d6d6" stroke-width="1.3"/><path d="M2.4 9.8A5.2 5.2 0 0 0 9.8 2.4Z" fill="#d6d6d6"/></svg><div style="left:1167px;top:97px;width:23px;height:22px;background:#1e1e1e;border-radius:3px;border:1px solid #393939;"></div><span id="t25" class="t" style="left:1173.6px;top:98.3px;font-size:14px;line-height:21px;color:#e6e6e6;font-family:'Liberation Serif',serif;letter-spacing:1.456px;font-weight:bold;-webkit-text-stroke:0.5px #e6e6e6;">T</span><svg style="left:1197px;top:103.4px;" width="11" height="11" viewBox="0 0 11 11"><rect x="1.5" y="1.5" width="8" height="8" fill="none" stroke="#e6e6e6" stroke-width="1.1"/><rect x="0.5" y="0.5" width="2" height="2" fill="#323232" stroke="#e6e6e6" stroke-width="1"/><rect x="0.5" y="8.5" width="2" height="2" fill="#323232" stroke="#e6e6e6" stroke-width="1"/><rect x="8.5" y="0.5" width="2" height="2" fill="#323232" stroke="#e6e6e6" stroke-width="1"/><rect x="8.5" y="8.5" width="2" height="2" fill="#323232" stroke="#e6e6e6" stroke-width="1"/></svg><svg style="left:1222px;top:103.3px;" width="10.2" height="11.8" viewBox="0 0 12 14"><path d="M3.6 5V0.6H8.2L11.4 3.8V12H7" fill="none" stroke="#e6e6e6" stroke-width="1.2"/><path d="M8 0.6V4H11.4" fill="none" stroke="#e6e6e6" stroke-width="1"/><rect x="0" y="6.4" width="6.6" height="7.2" fill="#e6e6e6"/></svg><div style="left:1248px;top:100px;width:10px;height:18px;border:1px solid #464646;border-radius:5px;background:#2a2a2a;"></div><svg style="left:1248px;top:100px;" width="10" height="10" viewBox="0 0 10 10"><circle cx="5.1" cy="4.6" r="4.15" fill="#f1592a"/></svg><div style="left:1018px;top:148.5px;width:262px;height:1px;background:#2b2b2b;"></div><div style="left:1022px;top:127px;width:117px;height:22px;background:#2a2a2a;border:1px solid #3d3d3d;border-radius:3px;"></div><span id="t26" class="t" style="left:1031px;top:130px;font-size:11.5px;line-height:18px;color:#8a8a8a;letter-spacing:-0.500px;">正常</span><svg style="left:1128px;top:137px;" width="7" height="4" viewBox="0 0 7 4"><path d="M0.5 0.5L3.5 4.0L6.5 0.5" fill="none" stroke="#555" stroke-width="1.1"/></svg><span id="t27" class="t" style="left:1146px;top:130px;font-size:12px;line-height:17px;color:#8a8a8a;letter-spacing:0.131px;">不透明度:</span><div style="left:1203px;top:127px;width:55px;height:21px;border:1px solid #444;border-radius:3px;background:#2a2a2a;"></div><div style="left:1241px;top:128px;width:1px;height:19px;background:#444;"></div><div style="left:1242px;top:128px;width:15px;height:19px;background:#303030;border-radius:0 2px 2px 0;"></div><span id="t28" class="t" style="left:1208px;top:129px;font-size:12px;line-height:17px;color:#767676;letter-spacing:-0.676px;">100%</span><svg style="left:1246px;top:136px;" width="7" height="4.5" viewBox="0 0 7 4.5"><path d="M0.5 0.5L3.5 4.0L6.5 0.5" fill="none" stroke="#c8c8c8" stroke-width="1.0"/></svg><span id="t29" class="t" style="left:1025px;top:159px;font-size:12px;line-height:17px;color:#6e6e6e;letter-spacing:0.219px;">锁定:</span><svg style="left:1062px;top:160px;" width="11" height="11" viewBox="0 0 11 11"><rect x="0.5" y="0.5" width="10" height="10" fill="none" stroke="#8e8e8e"/><rect x="1" y="1" width="3" height="3" fill="#8e8e8e"/><rect x="7" y="1" width="3" height="3" fill="#8e8e8e"/><rect x="4" y="4" width="3" height="3" fill="#8e8e8e"/><rect x="1" y="7" width="3" height="3" fill="#8e8e8e"/><rect x="7" y="7" width="3" height="3" fill="#8e8e8e"/></svg><svg style="left:1083px;top:159px;" width="14" height="14" viewBox="0 0 14 14"><path d="M12.4 0.6L13.9 0.1L14.2 1.7L8.7 9.8L5.9 7.7Z" fill="#8e8e8e"/><path d="M5.4 8.2L7.8 10C7.6 13 4 14.2 0.2 13.6C2.6 12.4 2.4 9.4 5.4 8.2Z" fill="#8e8e8e"/></svg><svg style="left:1105px;top:159px;" width="13" height="13" viewBox="0 0 16 16"><g fill="none" stroke="#d6d6d6" stroke-width="1.2"><path d="M8 1.5V14.5M1.5 8H14.5"/></g><path d="M8 0L10.8 3.4H5.2ZM8 16L10.8 12.6H5.2ZM0 8L3.4 5.2V10.8ZM16 8L12.6 5.2V10.8Z" fill="#d6d6d6"/></svg><svg style="left:1127px;top:160px;" width="14" height="14" viewBox="0 0 14 14"><path d="M3.2 0.6V13.6M0.4 3.2H8.6L11 5.6V13.6M0.4 11H13.6" fill="none" stroke="#d6d6d6" stroke-width="1.25"/><path d="M8.6 3.2V5.6H11" fill="none" stroke="#d6d6d6" stroke-width="0.9"/><path d="M11 0.4L11.8 1.6M13.6 3.2L12.4 3.4M12.9 1.1L12 2.2" stroke="#d6d6d6" stroke-width="0.9"/></svg><svg style="left:1151px;top:160px;" width="10" height="12" viewBox="0 0 10 12"><path d="M2.4 5.4V3.6A2.6 2.6 0 0 1 7.6 3.6V5.4" fill="none" stroke="#d6d6d6" stroke-width="1.5"/><rect x="0" y="5" width="10" height="7" fill="#d6d6d6"/><rect x="4.2" y="7.4" width="1.6" height="2" fill="#323232"/></svg><span id="t30" class="t" style="left:1170px;top:159.5px;font-size:12px;line-height:17px;color:#8a8a8a;letter-spacing:-0.115px;">填充:</span><div style="left:1203px;top:155.5px;width:55px;height:21px;border:1px solid #444;border-radius:3px;background:#2a2a2a;"></div><div style="left:1241px;top:156.5px;width:1px;height:19px;background:#444;"></div><div style="left:1242px;top:156.5px;width:15px;height:19px;background:#303030;border-radius:0 2px 2px 0;"></div><span id="t31" class="t" style="left:1208px;top:157.5px;font-size:12px;line-height:17px;color:#767676;letter-spacing:-0.676px;">100%</span><svg style="left:1246px;top:164.5px;" width="7" height="4.5" viewBox="0 0 7 4.5"><path d="M0.5 0.5L3.5 4.0L6.5 0.5" fill="none" stroke="#c8c8c8" stroke-width="1.0"/></svg><div style="left:1018px;top:183px;width:262px;height:476px;background:#2a2a2a;"></div><div style="left:1018px;top:184px;width:245px;height:45px;background:#323232;"></div><div style="left:1018px;top:183px;width:245px;height:1px;background:#2a2a2a;"></div><div style="left:1048px;top:184px;width:215px;height:22px;background:#4b4b4b;"></div><div style="left:1018px;top:206px;width:245px;height:1px;background:#2a2a2a;"></div><div style="left:1047px;top:184px;width:1px;height:45px;background:#2d2d2d;"></div><svg style="left:1027px;top:191px;" width="14" height="10" viewBox="0 0 14 10"><path d="M0 5C2.2 1.6 4.6 0.3 7 0.3S11.8 1.6 14 5C11.8 8.4 9.4 9.7 7 9.7S2.2 8.4 0 5Z" fill="#d6d6d6"/><circle cx="7" cy="4.6" r="3" fill="#323232"/><circle cx="6" cy="3.6" r="1" fill="#d6d6d6"/></svg><svg style="left:1027px;top:214px;" width="14" height="10" viewBox="0 0 14 10"><path d="M0 5C2.2 1.6 4.6 0.3 7 0.3S11.8 1.6 14 5C11.8 8.4 9.4 9.7 7 9.7S2.2 8.4 0 5Z" fill="#d6d6d6"/><circle cx="7" cy="4.6" r="3" fill="#323232"/><circle cx="6" cy="3.6" r="1" fill="#d6d6d6"/></svg><svg style="left:1050px;top:185px;" width="20" height="20" viewBox="0 0 20 20"><path d="M0.5 6V0.5H6M14 0.5H19.5V6M19.5 14V19.5H14M6 19.5H0.5V14" fill="none" stroke="#fff" stroke-width="1"/></svg><span id="t32" class="t" style="left:1055.5px;top:185.3px;font-size:13.5px;line-height:19px;color:#e6e6e6;font-family:'Liberation Serif',serif;letter-spacing:1.484px;font-weight:bold;-webkit-text-stroke:0.4px #e6e6e6;">T</span><span id="t33" class="t" style="left:1076.8px;top:187.5px;font-size:13.5px;line-height:17px;color:#e6e6e6;">/</span><div style="left:1052px;top:212px;width:80px;height:14px;background:#000;border:1px solid #5a5a5a;"></div><span id="t34" class="t" style="left:1142px;top:211px;font-size:11.5px;line-height:17px;color:#e6e6e6;letter-spacing:0.352px;">图层 1</span><div style="left:1018px;top:659px;width:262px;height:21px;background:#323232;"></div><svg style="left:1077px;top:662px;" width="15" height="9" viewBox="0 0 15 9"><rect x="0.7" y="0.7" width="7" height="7.4" rx="3.5" fill="none" stroke="#5e5e5e" stroke-width="1.3"/><rect x="7.3" y="0.7" width="7" height="7.4" rx="3.5" fill="none" stroke="#5e5e5e" stroke-width="1.3"/><path d="M4.4 4.4H10.6" stroke="#5e5e5e" stroke-width="1.3"/></svg><span id="t35" class="t" style="left:1105.5px;top:656.5px;font-size:14.5px;line-height:18px;color:#c8c8c8;letter-spacing:0.109px;font-style:italic;">fx</span><svg style="left:1115px;top:672px;" width="4" height="2.5" viewBox="0 0 4 2.5"><path d="M0 0H4L2 2.5Z" fill="#e6e6e6"/></svg><svg style="left:1131px;top:661px;" width="13" height="10" viewBox="0 0 13 10"><rect width="13" height="10" fill="#d0d0d0"/><circle cx="6.5" cy="5" r="2.9" fill="#323232"/></svg><svg style="left:1160px;top:661px;" width="12" height="12" viewBox="0 0 12 12"><circle cx="6" cy="6" r="5.2" fill="none" stroke="#d0d0d0" stroke-width="1.3"/><path d="M2.4 9.8A5.2 5.2 0 0 0 9.8 2.4Z" fill="#d0d0d0"/></svg><svg style="left:1170px;top:672px;" width="4" height="2.5" viewBox="0 0 4 2.5"><path d="M0 0H4L2 2.5Z" fill="#e6e6e6"/></svg><svg style="left:1186px;top:661px;" width="13" height="10" viewBox="0 0 13 10"><path d="M0 1.8H12.5V10H0Z M0 1.8V0.3H4.6L5.4 1.8" fill="#d0d0d0"/></svg><svg style="left:1214px;top:661px;" width="11" height="11" viewBox="0 0 11 11"><rect x="0.6" y="0.6" width="9.8" height="9.8" fill="none" stroke="#d6d6d6" stroke-width="1.2"/><path d="M5.5 3V8M3 5.5H8" stroke="#d6d6d6" stroke-width="1.2"/></svg><svg style="left:1240px;top:661px;" width="11" height="12" viewBox="0 0 11 12"><path d="M0 2.4H11M3.6 2.2V0.6H7.4V2.2" fill="none" stroke="#d6d6d6" stroke-width="1.2"/><path d="M1.4 3.4L1.8 11.4H9.2L9.6 3.4" fill="none" stroke="#d6d6d6" stroke-width="1.2"/><path d="M3.8 4.4V10M5.5 4.4V10M7.2 4.4V10" stroke="#d6d6d6" stroke-width="0.9"/></svg><div style="left:1279px;top:25px;width:1px;height:655px;background:#222;"></div><div style="left:822px;top:302px;width:346px;height:356px;background:#323232;box-shadow:0 3px 14px 2px rgba(0,0,0,0.45);"></div><div style="left:822px;top:302px;width:346px;height:30px;background:#fff;"></div><span id="t36" class="t" style="left:830px;top:308.5px;font-size:12px;line-height:19px;color:#000;letter-spacing:-0.004px;">画布大小</span><svg style="left:1147.5px;top:310.5px;" width="11" height="11" viewBox="0 0 11 11"><path d="M0.5 0.5L10.5 10.5M10.5 0.5L0.5 10.5" stroke="#1a1a1a" stroke-width="1.1" fill="none"/></svg><div style="left:833px;top:350px;width:255px;height:59px;border:1px solid #272727;"></div><div style="left:833px;top:423px;width:255px;height:180px;border:1px solid #272727;"></div><div style="left:844px;top:345px;width:117px;height:10px;background:#323232;"></div><div style="left:844px;top:418px;width:117px;height:10px;background:#323232;"></div><span id="t37" class="t" style="left:853px;top:342px;font-size:12.5px;line-height:19px;color:#e6e6e6;letter-spacing:0.307px;">当前大小: 2.58K</span><span id="t38" class="t" style="left:853px;top:415px;font-size:12.5px;line-height:19px;color:#e6e6e6;letter-spacing:0.307px;">新建大小: 2.58K</span><span id="t39" class="t" style="left:901px;top:363px;font-size:12.5px;line-height:19px;color:#b4b4b4;letter-spacing:0.172px;">宽度:</span><span id="t40" class="t" style="left:901px;top:385px;font-size:12.5px;line-height:19px;color:#b4b4b4;letter-spacing:0.172px;">高度:</span><span id="t41" class="t" style="left:940.5px;top:363px;font-size:12.5px;line-height:19px;color:#b4b4b4;letter-spacing:0.022px;">80 像素</span><span id="t42" class="t" style="left:941px;top:385px;font-size:12.5px;line-height:19px;color:#b4b4b4;letter-spacing:0.109px;">11 像素</span><div style="left:1104px;top:348px;width:53px;height:26px;border:2px solid #b4b4b4;border-radius:13px;"></div><span id="t43" class="t" style="left:1118px;top:353px;font-size:12.5px;line-height:19px;color:#f0f0f0;letter-spacing:0.242px;">确定</span><div style="left:1104px;top:382px;width:53px;height:26px;border:2px solid #6a6a6a;border-radius:13px;"></div><span id="t44" class="t" style="left:1118px;top:387px;font-size:12.5px;line-height:19px;color:#f0f0f0;letter-spacing:0.242px;">复位</span><span id="t45" class="t" style="left:879.7px;top:439px;font-size:12.5px;line-height:19px;color:#b4b4b4;letter-spacing:0.232px;">宽度(W):</span><span id="t46" class="t" style="left:882.5px;top:469.5px;font-size:12.5px;line-height:19px;color:#b4b4b4;letter-spacing:0.195px;">高度(H):</span><div style="left:936px;top:437px;width:69px;height:22.5px;background:#262626;border:1px solid #4a4a4a;"></div><div style="left:936px;top:468px;width:69px;height:22.5px;background:#262626;border:1px solid #4a4a4a;"></div><span id="t47" class="t" style="left:940.5px;top:439px;font-size:12.5px;line-height:19px;color:#ececec;letter-spacing:-0.203px;">80</span><span id="t48" class="t" style="left:940.5px;top:469.5px;font-size:12.5px;line-height:19px;color:#ececec;letter-spacing:-0.242px;">11</span><div style="left:1009px;top:438px;width:69px;height:22.5px;background:#292929;border:1px solid #474747;border-radius:3.5px;"></div><span id="t49" class="t" style="left:1020px;top:440.5px;font-size:12.5px;line-height:19.5px;color:#e6e6e6;letter-spacing:-0.258px;">像素</span><svg style="left:1066.5px;top:448.25px;" width="7" height="4.5" viewBox="0 0 7 4.5"><path d="M0.5 0.5L3.5 4.0L6.5 0.5" fill="none" stroke="#b4b4b4" stroke-width="1.0"/></svg><div style="left:1009px;top:469px;width:69px;height:22.5px;background:#292929;border:1.5px solid #1a6fe0;border-radius:3.5px;"></div><span id="t50" class="t" style="left:1020px;top:471.5px;font-size:12.5px;line-height:19.5px;color:#e6e6e6;letter-spacing:-0.258px;">像素</span><svg style="left:1066.5px;top:479.25px;" width="7" height="4.5" viewBox="0 0 7 4.5"><path d="M0.5 0.5L3.5 4.0L6.5 0.5" fill="none" stroke="#b4b4b4" stroke-width="1.0"/></svg><div style="left:919px;top:501px;width:12.5px;height:12.5px;border:1px solid #5a5a5a;border-radius:2.5px;background:#2c2c2c;"></div><span id="t51" class="t" style="left:940px;top:498.5px;font-size:12.5px;line-height:19px;color:#e6e6e6;letter-spacing:-0.172px;">相对(R)</span><span id="t52" class="t" style="left:900.5px;top:525px;font-size:12.5px;line-height:19px;color:#b4b4b4;letter-spacing:0.339px;">定位:</span><svg style="left:940px;top:525px;" width="71" height="71" viewBox="0 0 71 71"><rect x="0.5" y="0.5" width="69.5" height="69.5" fill="#323232" stroke="#7a7a7a"/><path d="M23.5 0.5V70M46.8 0.5V70M0.5 23.6H70M0.5 46.9H70" stroke="#7a7a7a" fill="none"/><g transform="translate(12 12) rotate(-45)"><path d="M0 9.4V0" stroke="#dcdcdc" stroke-width="1.1"/><path d="M0 -9.6L3.8 1.2H-3.8Z" fill="#dcdcdc"/></g><g transform="translate(35.2 12) rotate(0)"><path d="M0 9.4V0" stroke="#dcdcdc" stroke-width="1.1"/><path d="M0 -9.6L3.8 1.2H-3.8Z" fill="#dcdcdc"/></g><g transform="translate(58.4 12) rotate(45)"><path d="M0 9.4V0" stroke="#dcdcdc" stroke-width="1.1"/><path d="M0 -9.6L3.8 1.2H-3.8Z" fill="#dcdcdc"/></g><g transform="translate(12 35.2) rotate(-90)"><path d="M0 9.4V0" stroke="#dcdcdc" stroke-width="1.1"/><path d="M0 -9.6L3.8 1.2H-3.8Z" fill="#dcdcdc"/></g><g transform="translate(58.4 35.2) rotate(90)"><path d="M0 9.4V0" stroke="#dcdcdc" stroke-width="1.1"/><path d="M0 -9.6L3.8 1.2H-3.8Z" fill="#dcdcdc"/></g><g transform="translate(12 58.4) rotate(-135)"><path d="M0 9.4V0" stroke="#dcdcdc" stroke-width="1.1"/><path d="M0 -9.6L3.8 1.2H-3.8Z" fill="#dcdcdc"/></g><g transform="translate(35.2 58.4) rotate(180)"><path d="M0 9.4V0" stroke="#dcdcdc" stroke-width="1.1"/><path d="M0 -9.6L3.8 1.2H-3.8Z" fill="#dcdcdc"/></g><g transform="translate(58.4 58.4) rotate(135)"><path d="M0 9.4V0" stroke="#dcdcdc" stroke-width="1.1"/><path d="M0 -9.6L3.8 1.2H-3.8Z" fill="#dcdcdc"/></g><circle cx="35.2" cy="35.2" r="3.2" fill="#dcdcdc"/></svg><span id="t53" class="t" style="left:848px;top:622px;font-size:12.5px;line-height:19px;color:#7a7a7a;letter-spacing:0.502px;">画布扩展颜色:</span><div style="left:936px;top:619.5px;width:93.5px;height:22px;background:#292929;border:1px solid #474747;border-radius:3.5px;"></div><span id="t54" class="t" style="left:945.5px;top:622.0px;font-size:12.5px;line-height:19px;color:#7a7a7a;letter-spacing:-0.258px;">背景</span><svg style="left:1018.0px;top:629.5px;" width="7" height="4.5" viewBox="0 0 7 4.5"><path d="M0.5 0.5L3.5 4.0L6.5 0.5" fill="none" stroke="#5c5c5c" stroke-width="1.0"/></svg><div style="left:1035px;top:622.5px;width:16px;height:15.5px;border:1px solid #1c1c1c;background:#333;"></div><div style="left:0px;top:680px;width:1280px;height:40px;background:linear-gradient(90deg,#011a26 0%,#021623 50%,#03122a 100%);"></div><svg style="left:16px;top:692px;" width="16" height="16" viewBox="0 0 16 16"><path d="M0 2.3L6.6 1.4V7.6H0ZM7.4 1.3L16 0V7.6H7.4ZM0 8.4H6.6V14.6L0 13.7ZM7.4 8.4H16V16L7.4 14.7Z" fill="#fff"/></svg><svg style="left:63px;top:691.6px;" width="17" height="16" viewBox="0 0 17 16"><rect x="1.6" y="4.9" width="9.6" height="6" fill="none" stroke="#fff" stroke-width="1.4"/><path d="M1.5 2.6V1H11.3V2.6M1.5 13.4V15H11.3V13.4" fill="none" stroke="#fff" stroke-width="1.3"/><path d="M15.6 0.4V3.6M15.6 8.4V15.4" stroke="#fff" stroke-width="1.4"/><rect x="14.2" y="4.4" width="2.8" height="3" fill="#fff"/></svg><svg style="left:110px;top:688px;" width="26" height="25" viewBox="0 0 26 25"><defs><linearGradient id="gs" x1="0" y1="0" x2="1" y2="1"><stop offset="0" stop-color="#7fd0fb"/><stop offset="0.5" stop-color="#4db8f5"/><stop offset="1" stop-color="#33aef3"/></linearGradient></defs><rect x="4.4" y="1.6" width="20.4" height="14.4" fill="url(#gs)" stroke="#2f9fe6" stroke-width="0.8"/><circle cx="6" cy="14.2" r="4.6" fill="#9ed5f5" fill-opacity="0.7" stroke="#b4b4b4" stroke-width="1.3"/><path d="M9.4 17.8L15.2 23.2" stroke="#8c8c8c" stroke-width="2" stroke-linecap="round"/></svg><svg style="left:159px;top:687px;" width="26" height="26" viewBox="0 0 26 26"><path d="M6 2L23 1.2L21.4 16.4L5 15.4Z" fill="#2f57c9" stroke="#c9d3e6" stroke-width="1.2"/><path d="M7 3L15 2.6L9 9Z" fill="#0a1fb0"/><rect x="0.6" y="5.4" width="15.6" height="6.4" fill="#8fb7ea" stroke="#dfe9f7" stroke-width="1"/><path d="M2 7.4H15M2 9.6H15" stroke="#2c56b8" stroke-width="1" stroke-dasharray="1.4 0.8"/><path d="M11 16L15 16.4V19.6H11Z" fill="#bdbdbd"/><ellipse cx="12.6" cy="21.6" rx="5.8" ry="2.4" fill="#d9d9d9" stroke="#9a9a9a" stroke-width="0.6"/></svg><div style="left:197px;top:680px;width:48px;height:40px;background:#34404d;"></div><div style="left:197px;top:718px;width:48px;height:2px;background:#76b9ed;"></div><div style="left:250px;top:718px;width:40px;height:2px;background:#76b9ed;"></div><div style="left:299px;top:718px;width:40px;height:2px;background:#76b9ed;"></div><div style="left:210px;top:688px;width:22px;height:22px;background:#001e36;border-radius:4px;"></div><span id="t55" class="t" style="left:213.5px;top:690px;font-size:13.5px;line-height:19px;color:#31a8ff;letter-spacing:-0.858px;font-weight:bold;">Ps</span><svg style="left:258.6px;top:689.6px;" width="22" height="22" viewBox="0 0 22 22"><path d="M1 2.4C1 1.6 1.6 1.2 2.2 1.2H8.4L10.2 3.4H1Z" fill="#e0a419"/><path d="M1 3.2H20C20.8 3.2 21.2 3.8 21.2 4.4V17.6C21.2 18.4 20.6 18.8 20 18.8H2.2C1.4 18.8 1 18.2 1 17.6Z" fill="#f9d262"/><path d="M1 3.2H10.6L9.4 5H1Z" fill="#f4b400" opacity="0.5"/><path d="M5 11.8H17.2V19.6H5Z" fill="#3a94d9"/><path d="M7.8 14.6H14.4V19.6H7.8Z" fill="#f9d262"/><path d="M5 11.8H17.2V13.4H5Z" fill="#56b4f1"/></svg><svg style="left:307.25px;top:688.4px;" width="23" height="23" viewBox="0 0 23 23"><circle cx="11.5" cy="11.5" r="11.2" fill="#1488e6"/><circle cx="11.5" cy="11.5" r="11.2" fill="none" stroke="#0b6fd0" stroke-width="0.6"/><path d="M9.4 3.8L13.6 10.4L17 10.8L14.4 19.4L10 12.8L6.4 12.4Z" fill="#fff"/></svg><svg style="left:1022px;top:697px;" width="12" height="7" viewBox="0 0 12 7"><path d="M0.7 6.3L6 1L11.3 6.3" fill="none" stroke="#fff" stroke-width="1.3"/></svg><svg style="left:1043px;top:692px;" width="18" height="16" viewBox="0 0 18 16"><path d="M0.7 5.6H3.4L7.2 2V14L3.4 10.4H0.7Z" fill="none" stroke="#fff" stroke-width="1.2" stroke-linejoin="round"/><path d="M9.6 5.6C10.6 7 10.6 9 9.6 10.4M12 3.6C13.8 6 13.8 10 12 12.4M14.6 1.4C17.4 5 17.4 11 14.6 14.6" fill="none" stroke="#fff" stroke-width="1.1"/></svg><svg style="left:1068px;top:694px;" width="24" height="13" viewBox="0 0 24 13"><rect x="0.7" y="0.7" width="22" height="11.6" rx="1" fill="none" stroke="#fff" stroke-width="1.3"/><path d="M3.4 4H20.4M3.4 6.4H20.4" stroke="#fff" stroke-width="1.2" stroke-dasharray="1.4 1"/><path d="M5.6 9.2H18" stroke="#fff" stroke-width="1.3"/><path d="M3.4 9.2H4.6M19.2 9.2H20.4" stroke="#fff" stroke-width="1.2"/></svg><span id="t56" class="t" style="left:1098px;top:689px;font-size:16px;line-height:22px;color:#fff;letter-spacing:-0.016px;">英</span><div style="left:1129px;top:693px;width:14px;height:14px;background:#fff;"></div><span id="t57" class="t" style="left:1130px;top:693.5px;font-size:12px;line-height:15px;color:#04112b;letter-spacing:-0.016px;font-weight:bold;">拼</span><span id="t58" class="t" style="left:1178px;top:683.3px;font-size:12px;line-height:17px;color:#fff;letter-spacing:0.285px;">9:34</span><span id="t59" class="t" style="left:1161.3px;top:702.8px;font-size:12px;line-height:17px;color:#fff;letter-spacing:0.512px;">2023/10/3</span><svg style="left:1239.4px;top:692px;" width="24" height="24" viewBox="0 0 24 24"><path d="M0.4 0.4H15.6V12.2H7L3.6 15.4V12.2H0.4Z" fill="#fff"/><path d="M3 3.6H13M3 6.2H13M3 8.8H13" stroke="#04112b" stroke-width="1.2"/><circle cx="15.2" cy="15.5" r="7.4" fill="#4a4f58" stroke="#6d727b" stroke-width="1.2"/><text x="15.2" y="19.6" text-anchor="middle" font-family="Liberation Sans,sans-serif" font-size="11.5" font-weight="bold" fill="#fff">1</text></svg><div style="left:1275.5px;top:680px;width:1px;height:40px;background:#5a6470;"></div></div>
<div class="shot" style="left:1280px"><div style="left:267px;top:204px;width:221px;height:409px;background:#000;"></div><div style="left:257px;top:227px;width:224.5px;height:386px;background:#fff;"></div><div style="left:257px;top:227px;width:10px;height:386px;background:#e6e6e6;"></div><div style="left:257px;top:613px;width:225px;height:33.7px;background:#e6e6e6;"></div><div style="left:481.5px;top:235.5px;width:6.3px;height:31.4px;background:#d0d0d0;"></div><svg style="left:0px;top:0px;" width="1280" height="720" viewBox="0 0 1280 720"><g shape-rendering="crispEdges"><rect x="392.93" y="235.46" width="31.76" height="31.76" fill="#999"/><rect x="424.38" y="235.46" width="31.76" height="31.76" fill="#000"/><rect x="455.84" y="235.46" width="25.96" height="31.76" fill="#2e2e2e"/><rect x="392.93" y="266.91" width="31.76" height="31.76" fill="#2e2e2e"/><rect x="424.38" y="266.91" width="31.76" height="31.76" fill="#757575"/><rect x="392.93" y="298.37" width="31.76" height="31.76" fill="#2e2e2e"/><rect x="424.38" y="298.37" width="31.76" height="31.76" fill="#484848"/><rect x="361.47" y="329.83" width="31.76" height="31.76" fill="#484848"/><rect x="392.93" y="329.83" width="31.76" height="31.76" fill="#484848"/><rect x="424.38" y="329.83" width="31.76" height="31.76" fill="#999"/><rect x="361.47" y="361.28" width="31.76" height="31.76" fill="#2e2e2e"/><rect x="392.93" y="361.28" width="31.76" height="31.76" fill="#484848"/><rect x="330.01" y="392.74" width="31.76" height="31.76" fill="#999"/><rect x="361.47" y="392.74" width="31.76" height="31.76" fill="#2e2e2e"/><rect x="392.93" y="392.74" width="31.76" height="31.76" fill="#999"/><rect x="330.01" y="424.20" width="31.76" height="31.76" fill="#484848"/><rect x="361.47" y="424.20" width="31.76" height="31.76" fill="#484848"/><rect x="298.56" y="455.66" width="31.76" height="31.76" fill="#757575"/><rect x="330.01" y="455.66" width="31.76" height="31.76" fill="#484848"/><rect x="361.47" y="455.66" width="31.76" height="31.76" fill="#999"/><rect x="298.56" y="487.11" width="31.76" height="31.76" fill="#484848"/><rect x="330.01" y="487.11" width="31.76" height="31.76" fill="#484848"/><rect x="267.10" y="518.57" width="31.76" height="31.76" fill="#999"/><rect x="298.56" y="518.57" width="31.76" height="31.76" fill="#484848"/><rect x="330.01" y="518.57" width="31.76" height="31.76" fill="#757575"/><rect x="267.10" y="550.03" width="31.76" height="31.76" fill="#151515"/><rect x="298.56" y="550.03" width="31.76" height="31.76" fill="#151515"/></g></svg><div style="left:254px;top:224px;width:7px;height:7px;border:1px solid #fff;background:transparent;"></div><div style="left:366px;top:224px;width:7px;height:7px;border:1px solid #fff;background:transparent;"></div><div style="left:479px;top:224px;width:7px;height:7px;border:1px solid #fff;background:transparent;"></div><div style="left:254px;top:434px;width:7px;height:7px;border:1px solid #fff;background:transparent;"></div><div style="left:479px;top:434px;width:7px;height:7px;border:1px solid #fff;background:transparent;"></div><div style="left:254px;top:643px;width:7px;height:7px;border:1px solid #fff;background:transparent;"></div><div style="left:366px;top:643px;width:7px;height:7px;border:1px solid #fff;background:transparent;"></div><div style="left:479px;top:643px;width:7px;height:7px;border:1px solid #fff;background:transparent;"></div><div style="left:0px;top:0px;width:1280px;height:24px;background:#323232;"></div><div style="left:0px;top:24px;width:1280px;height:1px;background:#232323;"></div><div style="left:5px;top:4px;width:16px;height:15px;background:#001e36;border-radius:2.5px;"></div><span id="t60" class="t" style="left:8.5px;top:5px;font-size:9.5px;line-height:15px;color:#31a8ff;letter-spacing:-0.812px;font-weight:bold;">Ps</span><span id="t61" class="t" style="left:35px;top:4px;font-size:12px;line-height:19px;color:#dedede;letter-spacing:-0.466px;">文件(F)</span><span id="t62" class="t" style="left:84px;top:4px;font-size:12px;line-height:19px;color:#dedede;letter-spacing:-0.600px;">编辑(E)</span><span id="t63" class="t" style="left:133px;top:4px;font-size:12px;line-height:19px;color:#dedede;letter-spacing:-0.266px;">图像(I)</span><span id="t64" class="t" style="left:179px;top:4px;font-size:12px;line-height:19px;color:#dedede;letter-spacing:-0.534px;">图层(L)</span><span id="t65" class="t" style="left:228px;top:4px;font-size:12px;line-height:19px;color:#dedede;letter-spacing:-0.600px;">文字(Y)</span><span id="t66" class="t" style="left:278px;top:4px;font-size:12px;line-height:19px;color:#dedede;letter-spacing:-0.600px;">选择(S)</span><span id="t67" class="t" style="left:328px;top:4px;font-size:12px;line-height:19px;color:#dedede;letter-spacing:-0.466px;">滤镜(T)</span><span id="t68" class="t" style="left:378px;top:4px;font-size:12px;line-height:19px;color:#dedede;letter-spacing:-0.400px;">3D(D)</span><span id="t69" class="t" style="left:421px;top:4px;font-size:12px;line-height:19px;color:#dedede;letter-spacing:-0.400px;">视图(V)</span><span id="t70" class="t" style="left:472px;top:3px;font-size:12px;line-height:19px;color:#dedede;letter-spacing:-0.004px;">增效工具</span><span id="t71" class="t" style="left:532px;top:4px;font-size:12px;line-height:19px;color:#dedede;letter-spacing:-0.266px;">窗口(W)</span><span id="t72" class="t" style="left:586px;top:4px;font-size:12px;line-height:19px;color:#dedede;letter-spacing:-0.334px;">帮助(H)</span><div style="left:1174px;top:-1px;width:103px;height:20px;border:1px solid #474747;border-radius:0 0 3px 3px;background:#303030;"></div><div style="left:1202px;top:0px;width:1px;height:18px;background:#474747;"></div><div style="left:1229px;top:0px;width:1px;height:18px;background:#474747;"></div><div style="left:1183px;top:11px;width:10px;height:3px;background:#9a9a9a;"></div><svg style="left:1210px;top:5px;" width="12" height="10" viewBox="0 0 12 10"><path d="M3.5 3V1h7v5h-2" fill="none" stroke="#9a9a9a" stroke-width="2"/><rect x="1" y="4.5" width="6.5" height="4.5" fill="none" stroke="#9a9a9a" stroke-width="2"/></svg><svg style="left:1248px;top:5px;" width="10" height="8" viewBox="0 0 10 8"><path d="M1 0.5L9 7.5M9 0.5L1 7.5" stroke="#9a9a9a" stroke-width="2.2" fill="none"/></svg><div style="left:0px;top:25px;width:1280px;height:35px;background:#323232;"></div><div style="left:0px;top:60px;width:1280px;height:1px;background:#262626;"></div><div style="left:0px;top:25px;width:1px;height:36px;background:#222;"></div><div style="left:5px;top:33px;width:2px;height:20px;background:repeating-linear-gradient(#262626 0 1px,transparent 1px 2px);"></div><svg style="left:20px;top:35.2px;" width="16.2" height="15" viewBox="0 0 16.2 15"><path d="M8 0.5 L16 8 H13.6 V14.5 H9.8 V9.6 H6.2 V14.5 H2.4 V8 H0 Z" fill="#8e8e8e"/></svg><div style="left:53px;top:30px;width:1px;height:25px;background:#282828;"></div><svg style="left:60.9px;top:35px;" width="15.4" height="15.4" viewBox="0 0 16 16"><g fill="none" stroke="#d6d6d6" stroke-width="1.3"><path d="M8 1.5V14.5M1.5 8H14.5"/></g><path d="M8 0L10.8 3.4H5.2ZM8 16L10.8 12.6H5.2ZM0 8L3.4 5.2V10.8ZM16 8L12.6 5.2V10.8Z" fill="#d6d6d6"/></svg><svg style="left:87px;top:41px;" width="8" height="5" viewBox="0 0 8 5"><path d="M0.5 0.5L4.0 4.5L7.5 0.5" fill="none" stroke="#bdbdbd" stroke-width="1.2"/></svg><div style="left:102px;top:30px;width:1px;height:25px;background:#282828;"></div><div style="left:110px;top:29px;width:26px;height:27px;background:#1e1e1e;border-radius:4px;border:1px solid #393939;"></div><svg style="left:114px;top:34px;" width="20" height="18" viewBox="0 0 20 18"><path d="M6.8 1.1L12.2 4.2L6.8 7.3L1.4 4.2Z" fill="none" stroke="#d6d6d6" stroke-width="1.05"/><path d="M1.2 7.7L6.8 10.9L10.4 8.9" fill="none" stroke="#d6d6d6" stroke-width="1.25"/><path d="M1.2 11.2L6.8 14.4L10.4 12.4" fill="none" stroke="#d6d6d6" stroke-width="1.25"/><path d="M1.2 14.7L6.8 17.9L10.4 15.9" fill="none" stroke="#d6d6d6" stroke-width="1.25"/><path d="M11.2 7.2L17.7 12.5L13.6 13.2L11.4 16.4Z" fill="#c8c8c8"/></svg><div style="left:144.6px;top:32.2px;width:52px;height:22.6px;background:#292929;border:1px solid #3d3d3d;border-radius:4px;"></div><span id="t73" class="t" style="left:153.5px;top:35.5px;font-size:12px;line-height:19px;color:#808080;letter-spacing:-0.758px;">图层</span><svg style="left:186px;top:42.3px;" width="7.4" height="4.6" viewBox="0 0 7.4 4.6"><path d="M0.5 0.5L3.7 4.1L6.9 0.5" fill="none" stroke="#5c5c5c" stroke-width="1.2"/></svg><div style="left:205px;top:30px;width:1px;height:25px;background:#282828;"></div><svg style="left:218.8px;top:36px;" width="16" height="14.4" viewBox="0 0 16 14.4"><rect x="1.2" y="1.2" width="13.6" height="12" fill="none" stroke="#8a8a8a" stroke-width="0.8"/><rect x="0" y="0" width="2.4" height="2.4" fill="#e0e0e0"/><rect x="0" y="6" width="2.4" height="2.4" fill="#e0e0e0"/><rect x="0" y="12" width="2.4" height="2.4" fill="#e0e0e0"/><rect x="6.8" y="0" width="2.4" height="2.4" fill="#e0e0e0"/><rect x="6.8" y="6" width="2.4" height="2.4" fill="#e0e0e0"/><rect x="6.8" y="12" width="2.4" height="2.4" fill="#e0e0e0"/><rect x="13.6" y="0" width="2.4" height="2.4" fill="#e0e0e0"/><rect x="13.6" y="6" width="2.4" height="2.4" fill="#e0e0e0"/><rect x="13.6" y="12" width="2.4" height="2.4" fill="#e0e0e0"/></svg><div style="left:248px;top:30px;width:1px;height:25px;background:#282828;"></div><svg style="left:0px;top:0px;" width="600" height="60" viewBox="0 0 600 60"><rect x="264" y="35" width="1.1" height="15" fill="#8c8c8c"/><rect x="266" y="38" width="7" height="4" fill="#8c8c8c"/><rect x="266" y="44" width="11.2" height="4" fill="#8c8c8c"/><rect x="296" y="35" width="1.1" height="16" fill="#8c8c8c"/><rect x="293" y="38" width="7" height="4" fill="#8c8c8c"/><rect x="291" y="44" width="11" height="4" fill="#8c8c8c"/><rect x="327" y="35" width="1.1" height="15" fill="#8c8c8c"/><rect x="319" y="38" width="7" height="4" fill="#8c8c8c"/><rect x="315" y="44" width="11" height="4" fill="#8c8c8c"/><rect x="348" y="38" width="16" height="1.1" fill="#8c8c8c"/><rect x="351" y="41" width="10" height="4" fill="#8c8c8c"/><rect x="348" y="47" width="16" height="1.1" fill="#8c8c8c"/><rect x="392" y="37" width="14" height="1.1" fill="#8c8c8c"/><rect x="394" y="39" width="4" height="11" fill="#8c8c8c"/><rect x="400" y="39" width="4" height="7" fill="#8c8c8c"/><rect x="418" y="43" width="14" height="1.1" fill="#8c8c8c"/><rect x="420" y="38" width="4" height="11" fill="#8c8c8c"/><rect x="426" y="40" width="4" height="7" fill="#8c8c8c"/><rect x="444" y="48" width="14" height="1.1" fill="#8c8c8c"/><rect x="446" y="36" width="4" height="11" fill="#8c8c8c"/><rect x="452" y="40" width="4" height="7" fill="#8c8c8c"/><rect x="480" y="35" width="1.1" height="16" fill="#8c8c8c"/><rect x="483" y="38" width="4" height="10" fill="#8c8c8c"/><rect x="489" y="35" width="1.1" height="16" fill="#8c8c8c"/></svg><div style="left:377px;top:30px;width:1px;height:25px;background:#282828;"></div><div style="left:506px;top:30px;width:1px;height:25px;background:#282828;"></div><svg style="left:519px;top:39px;" width="18" height="6" viewBox="0 0 18 6"><circle cx="3" cy="3.1" r="2" fill="#dcdcdc"/><circle cx="9" cy="3.1" r="2" fill="#dcdcdc"/><circle cx="15" cy="3.1" r="2" fill="#dcdcdc"/></svg><div style="left:549px;top:30px;width:1px;height:25px;background:#282828;"></div><span id="t74" class="t" style="left:559px;top:34px;font-size:12px;line-height:19px;color:#6a6a6a;letter-spacing:0.331px;">3D 模式:</span><svg style="left:620px;top:35.4px;" width="20" height="16" viewBox="0 0 20 16"><path d="M7.4 3.6C1.6 4.4 -0.6 8.4 3 11.6M13.6 4.4C19.4 6 21.4 11.6 14 13.4C11.6 13.9 9.6 13.8 8 13.6" fill="none" stroke="#d6d6d6" stroke-width="1.1"/><circle cx="10.6" cy="5" r="3.7" fill="#4a4a4a" stroke="#d6d6d6" stroke-width="1"/><path d="M2.6 10.4L8.6 14L2.8 14.8Z" fill="#d6d6d6"/></svg><svg style="left:647px;top:34px;" width="18" height="18" viewBox="0 0 18 18"><circle cx="9" cy="9.4" r="3.4" fill="#444" stroke="#d6d6d6" stroke-width="1.1"/><path d="M3.6 4.2A7.6 7.6 0 1 1 1.6 10.6" fill="none" stroke="#d6d6d6" stroke-width="1.1"/><path d="M1.2 2L6 2.6L2.6 6.6Z" fill="#d6d6d6"/></svg><svg style="left:673px;top:34px;" width="17" height="17" viewBox="0 0 17 17"><path d="M8.5 0.5L5.5 4H7.3V7.3H4V5.5L0.5 8.5L4 11.5V9.7H7.3V13H5.5L8.5 16.5L11.5 13H9.7V9.7H13V11.5L16.5 8.5L13 5.5V7.3H9.7V4H11.5Z" fill="#3a3a3a" stroke="#d6d6d6" stroke-width="0.9" stroke-linejoin="round"/></svg><svg style="left:698px;top:34px;" width="19" height="17" viewBox="0 0 19 17"><circle cx="9.5" cy="8.2" r="2.8" fill="#555"/><path d="M9.5 0L12.4 3.6H6.6ZM9.5 16.6L12.8 12.6H6.2ZM0 8.2L4.4 5.2V11.2ZM19 8.2L14.6 5.2V11.2Z" fill="#d6d6d6"/><path d="M9.5 3V5M9.5 11.4V13M4 8.2H6.4M12.6 8.2H15" stroke="#d6d6d6" stroke-width="1.6"/></svg><svg style="left:724px;top:35px;" width="20" height="15" viewBox="0 0 20 15"><rect x="0" y="3.4" width="8.4" height="8.2" fill="#d6d6d6"/><path d="M8.4 7.5L12.2 4V11Z" fill="#d6d6d6"/><path d="M19 0.4L14 7.5L19 14.6M16.4 4L19.4 7.5L16.4 11" fill="none" stroke="#d6d6d6" stroke-width="0.9"/></svg><svg style="left:1211.8px;top:35.2px;" width="16" height="17" viewBox="0 0 16 17"><circle cx="6.5" cy="6.5" r="5.2" fill="none" stroke="#d6d6d6" stroke-width="1.6"/><path d="M10.4 10.6L15 15.6" stroke="#d6d6d6" stroke-width="2" /></svg><svg style="left:1241px;top:37px;" width="17" height="14" viewBox="0 0 17 14"><rect x="0.6" y="0.6" width="15" height="11.8" fill="none" stroke="#8e8e8e" stroke-width="1.2"/><path d="M2.6 4h2.6v6.4h-2.6zM2.6 6.2h2.6M2.6 8.2h2.6" stroke="#8e8e8e" stroke-width="0.9" fill="none"/><path d="M0.6 1.4h15" stroke="#8e8e8e" stroke-width="1.6"/></svg><svg style="left:1266.8px;top:40.6px;" width="7.4" height="4.4" viewBox="0 0 7.4 4.4"><path d="M0.5 0.5L3.7 3.9000000000000004L6.9 0.5" fill="none" stroke="#555" stroke-width="1.1"/></svg><div style="left:0px;top:61px;width:1280px;height:20px;background:#262626;"></div><div style="left:0px;top:80px;width:1280px;height:1px;background:#212121;"></div><div style="left:42px;top:61px;width:264px;height:19px;background:#262626;"></div><span id="t75" class="t" style="left:51px;top:63px;font-size:12px;line-height:19px;color:#8a8a8a;letter-spacing:-0.143px;">未标题-1.psd @ 234% (2023/9/30, RGB/8) *</span><svg style="left:288px;top:68px;" width="7" height="7" viewBox="0 0 7 7"><path d="M0.5 0.5L6.5 6.5M6.5 0.5L0.5 6.5" stroke="#8a8a8a" stroke-width="1" fill="none"/></svg><div style="left:306px;top:61px;width:198px;height:19px;background:#323232;"></div><span id="t76" class="t" style="left:315px;top:63px;font-size:12px;line-height:19px;color:#e4e4e4;letter-spacing:-0.201px;">未标题-1 @ 3150% (/, RGB/8) *</span><svg style="left:487px;top:68px;" width="7" height="7" viewBox="0 0 7 7"><path d="M0.5 0.5L6.5 6.5M6.5 0.5L0.5 6.5" stroke="#9a9a9a" stroke-width="1" fill="none"/></svg><div style="left:0px;top:61px;width:42px;height:620px;background:#1f1f1f;"></div><div style="left:1px;top:61px;width:38px;height:12px;background:#252525;"></div><div style="left:1px;top:73px;width:38px;height:607px;background:#323232;"></div><svg style="left:5px;top:64px;" width="8" height="5" viewBox="0 0 8 5"><path d="M0.5 0.5L2.8 2.5L0.5 4.5M4.5 0.5L6.8 2.5L4.5 4.5" fill="none" stroke="#c8c8c8" stroke-width="1.1"/></svg><div style="left:10px;top:76px;width:20px;height:4px;background:repeating-linear-gradient(90deg,#222 0 1px,transparent 1px 2px);"></div><div style="left:4px;top:90px;width:31px;height:24px;background:#1e1e1e;border-radius:3px;border:1px solid #393939;"></div><svg style="left:9px;top:92px;" width="20" height="20" viewBox="0 0 20 20"><g transform="translate(2.5 2.5) scale(0.94)"><g fill="none" stroke="#d6d6d6" stroke-width="1.35"><path d="M8 1.5V14.5M1.5 8H14.5"/></g><path d="M8 0L10.8 3.4H5.2ZM8 16L10.8 12.6H5.2ZM0 8L3.4 5.2V10.8ZM16 8L12.6 5.2V10.8Z" fill="#d6d6d6"/></g></svg><svg style="left:9px;top:118px;" width="20" height="20" viewBox="0 0 20 20"><rect x="2.6" y="3.6" width="15" height="12.6" fill="none" stroke="#d6d6d6" stroke-width="1.1" stroke-dasharray="3.2 1.9" stroke-dashoffset="1.6"/></svg><svg style="left:9px;top:144px;" width="20" height="20" viewBox="0 0 20 20"><ellipse cx="10.8" cy="9.2" rx="7.6" ry="5.2" transform="rotate(-22 10.8 9.2)" fill="none" stroke="#d6d6d6" stroke-width="1.1"/><ellipse cx="5.2" cy="13.6" rx="2.1" ry="1.7" fill="none" stroke="#d6d6d6" stroke-width="1"/><path d="M6 15C6.8 16.4 6.8 17.6 6.2 18.8" fill="none" stroke="#d6d6d6" stroke-width="1"/></svg><svg style="left:29px;top:160px;" width="3" height="3" viewBox="0 0 3 3"><path d="M3 0V3H0Z" fill="#9a9a9a"/></svg><svg style="left:9px;top:170px;" width="20" height="20" viewBox="0 0 20 20"><path d="M3.2 17.2L12.6 7.4" stroke="#d6d6d6" stroke-width="3.2" stroke-linecap="round"/><path d="M10.4 9.8L12.4 7.7" stroke="#323232" stroke-width="1.2" stroke-linecap="round"/><path d="M8.6 0.8V5.4M6.3 3.1H10.9M16.4 0.6V5.8M13.8 3.2H19M17.4 7.8V11.4M15.6 9.6H19.2" stroke="#d6d6d6" stroke-width="1" /></svg><svg style="left:9px;top:196px;" width="20" height="20" viewBox="0 0 20 20"><ellipse cx="5.8" cy="11.4" rx="4.2" ry="5.8" fill="none" stroke="#d6d6d6" stroke-width="1.2" stroke-dasharray="1.2 1.3"/><path d="M19.4 4.6L19.8 5L15.2 12.2L12.2 10.2Z" fill="#d6d6d6"/><path d="M11.6 10.8L14.6 12.8C14.4 15.6 11.4 16.6 8.6 16C10.4 15 9.8 12 11.6 10.8Z" fill="#d6d6d6"/></svg><svg style="left:9px;top:222px;" width="20" height="20" viewBox="0 0 20 20"><path d="M5.4 0.4V14.4H19" fill="none" stroke="#d6d6d6" stroke-width="2"/><path d="M0.2 4.6H14.6V19.4" fill="none" stroke="#d6d6d6" stroke-width="2"/><rect x="2.2" y="3.2" width="1.4" height="3" fill="#323232"/><rect x="16.2" y="13" width="1.2" height="3" fill="#323232"/></svg><svg style="left:9px;top:248px;" width="20" height="20" viewBox="0 0 20 20"><path d="M8.2 2.6A5.2 5.2 0 1 0 5.4 12.8" fill="none" stroke="#d6d6d6" stroke-width="1.1" stroke-dasharray="2 1.4"/><rect x="2.4" y="8.2" width="17.8" height="7" rx="3.5" transform="rotate(-40 11.3 11.7)" fill="#d6d6d6"/><g fill="#323232"><rect x="9.2" y="10.8" width="1.3" height="1.3"/><rect x="11.4" y="9" width="1.3" height="1.3"/><rect x="11" y="12.6" width="1.3" height="1.3"/><rect x="13.2" y="10.8" width="1.3" height="1.3"/></g></svg><svg style="left:29px;top:264px;" width="3" height="3" viewBox="0 0 3 3"><path d="M3 0V3H0Z" fill="#9a9a9a"/></svg><svg style="left:9px;top:274px;" width="20" height="20" viewBox="0 0 20 20"><rect x="4" y="4.6" width="12.4" height="11.6" fill="#8a8a8a" stroke="#d6d6d6" stroke-width="0.8"/><path d="M6.4 2.4V4.4M6.4 16.4V18.4" stroke="#d6d6d6" stroke-width="1.2"/><path d="M10.2 2.4V4.4M10.2 16.4V18.4" stroke="#d6d6d6" stroke-width="1.2"/><path d="M14 2.4V4.4M14 16.4V18.4" stroke="#d6d6d6" stroke-width="1.2"/><path d="M2 7H4M16.4 7H18.4" stroke="#d6d6d6" stroke-width="1.2"/><path d="M2 10.4H4M16.4 10.4H18.4" stroke="#d6d6d6" stroke-width="1.2"/><path d="M2 13.8H4M16.4 13.8H18.4" stroke="#d6d6d6" stroke-width="1.2"/></svg><svg style="left:9px;top:300px;" width="20" height="20" viewBox="0 0 20 20"><path d="M2.2 17.6L4 12.2L13.4 2.8C14.4 1.8 15.6 2 16.4 2.8L17.2 3.6C18 4.4 18.2 5.6 17.2 6.6L7.8 16Z" fill="#6c6c6c" stroke="#d6d6d6" stroke-width="1"/><path d="M4 12.2L7.8 16M12.6 3.8L16.2 7.4" stroke="#d6d6d6" stroke-width="0.9"/><path d="M2.2 17.6L3 15L4.8 16.8Z" fill="#d6d6d6"/></svg><svg style="left:29px;top:316px;" width="3" height="3" viewBox="0 0 3 3"><path d="M3 0V3H0Z" fill="#9a9a9a"/></svg><svg style="left:9px;top:326px;" width="20" height="20" viewBox="0 0 20 20"><circle cx="10.8" cy="5.4" r="3.2" fill="#d6d6d6"/><path d="M9.4 7.6H12.2L12.8 11.6H8.8Z" fill="#d6d6d6"/><path d="M4.4 11.4H17.2V14.6H4.4Z" fill="#d6d6d6"/><path d="M4.4 16.8H17.2" stroke="#d6d6d6" stroke-width="1.1"/></svg><svg style="left:29px;top:342px;" width="3" height="3" viewBox="0 0 3 3"><path d="M3 0V3H0Z" fill="#9a9a9a"/></svg><svg style="left:9px;top:352px;" width="20" height="20" viewBox="0 0 20 20"><path d="M2.6 13.6L11.6 4.4" stroke="#d6d6d6" stroke-width="1"/><path d="M11 2.8L16.4 6.4L10.4 14L5.4 10.4Z" fill="#d6d6d6"/><path d="M6 10L2.4 14L5.8 16.6L10.6 13.8" fill="none" stroke="#d6d6d6" stroke-width="1.1"/><path d="M5.8 16.8H17" stroke="#d6d6d6" stroke-width="1.1"/></svg><svg style="left:29px;top:368px;" width="3" height="3" viewBox="0 0 3 3"><path d="M3 0V3H0Z" fill="#9a9a9a"/></svg><svg style="left:9px;top:378px;" width="20" height="20" viewBox="0 0 20 20"><path d="M7.4 5.2L15 11.4L8.8 18L2.4 11.4Z" fill="none" stroke="#d6d6d6" stroke-width="1.1"/><path d="M7.6 9.4V3.4C7.4 1.2 5.2 1.2 5.2 3.4V6" fill="none" stroke="#d6d6d6" stroke-width="1"/><circle cx="7.8" cy="9.8" r="1" fill="#d6d6d6"/><path d="M11.4 5L16.8 11.6" stroke="#d6d6d6" stroke-width="1"/><path d="M17.2 12C18.6 14 18.8 15.4 17.6 16.2C16.4 16.8 15 15.6 15.6 14C16 13 16.8 12.8 17.2 12Z" fill="#d6d6d6"/></svg><svg style="left:29px;top:394px;" width="3" height="3" viewBox="0 0 3 3"><path d="M3 0V3H0Z" fill="#9a9a9a"/></svg><svg style="left:9px;top:404px;" width="20" height="20" viewBox="0 0 20 20"><path d="M12.8 1.6L18 6.6L16 8.6L10.8 3.6Z" fill="#d6d6d6"/><path d="M10.4 4.4L4.6 8.2L2.4 17.6L11.8 15.2L15.4 9.4" fill="none" stroke="#d6d6d6" stroke-width="1.2"/><path d="M2.6 17.4L8 11.6" stroke="#d6d6d6" stroke-width="1"/><circle cx="8.6" cy="11" r="1.7" fill="none" stroke="#d6d6d6" stroke-width="1"/></svg><svg style="left:29px;top:420px;" width="3" height="3" viewBox="0 0 3 3"><path d="M3 0V3H0Z" fill="#9a9a9a"/></svg><svg style="left:9px;top:430px;" width="20" height="20" viewBox="0 0 20 20"><path d="M4 3.4H17V7H15.6L15.2 5H11.6V15.4L13.6 15.8V17H7.4V15.8L9.4 15.4V5H5.8L5.4 7H4Z" fill="#d6d6d6"/></svg><svg style="left:29px;top:446px;" width="3" height="3" viewBox="0 0 3 3"><path d="M3 0V3H0Z" fill="#9a9a9a"/></svg><svg style="left:9px;top:456px;" width="20" height="20" viewBox="0 0 20 20"><rect x="2.6" y="3.6" width="15.4" height="12.4" fill="#555" stroke="#d6d6d6" stroke-width="1.1"/></svg><svg style="left:29px;top:472px;" width="3" height="3" viewBox="0 0 3 3"><path d="M3 0V3H0Z" fill="#9a9a9a"/></svg><svg style="left:9px;top:482px;" width="20" height="20" viewBox="0 0 20 20"><circle cx="8" cy="8" r="5.6" fill="none" stroke="#d6d6d6" stroke-width="1.5"/><path d="M12 12.4L17.6 18" stroke="#d6d6d6" stroke-width="1.9" stroke-linecap="round"/></svg><svg style="left:9px;top:508px;" width="20" height="20" viewBox="0 0 20 20"><circle cx="5.2" cy="10.4" r="1.7" fill="#d6d6d6"/><circle cx="11" cy="10.4" r="1.7" fill="#d6d6d6"/><circle cx="16.8" cy="10.4" r="1.7" fill="#d6d6d6"/></svg><svg style="left:29px;top:524px;" width="3" height="3" viewBox="0 0 3 3"><path d="M3 0V3H0Z" fill="#9a9a9a"/></svg><svg style="left:3px;top:536px;" width="12" height="12" viewBox="0 0 12 12"><rect x="3.5" y="3.5" width="7" height="7" fill="#fff" stroke="#d6d6d6"/><rect x="0.5" y="0.5" width="7" height="7" fill="#000" stroke="#d6d6d6"/></svg><svg style="left:22px;top:535px;" width="12" height="12" viewBox="0 0 12 12"><path d="M2 3.5C6 2.5 9 4.5 9 8.5" fill="none" stroke="#d6d6d6" stroke-width="1.6"/><path d="M0 3.6L4 0.6V6.4Z M9 12L6 8H12Z" fill="#d6d6d6"/></svg><div style="left:14px;top:562px;width:19px;height:19px;background:#fff;border:1px solid #d6d6d6;"></div><div style="left:4px;top:552px;width:20px;height:20px;background:#000;border:1px solid #e0e0e0;outline:1px solid #323232;"></div><svg style="left:10px;top:593px;" width="18" height="14" viewBox="0 0 18 14"><rect x="0.5" y="0.5" width="17" height="13" fill="none" stroke="#d6d6d6"/><circle cx="9" cy="7" r="4" fill="none" stroke="#d6d6d6" stroke-dasharray="1 1"/></svg><svg style="left:10px;top:619px;" width="18" height="15" viewBox="0 0 18 15"><rect x="4.75" y="0.75" width="12.5" height="8.5" fill="none" stroke="#d6d6d6" stroke-width="1.5"/><rect x="0.75" y="4.75" width="10.5" height="8.5" fill="#323232" stroke="#d6d6d6" stroke-width="1.5"/></svg><svg style="left:29px;top:632px;" width="3" height="3" viewBox="0 0 3 3"><path d="M3 0V3H0Z" fill="#9a9a9a"/></svg><div style="left:42px;top:663px;width:974px;height:17px;background:#2a2a2a;"></div><div style="left:42px;top:663px;width:48px;height:17px;background:#1d1d1d;"></div><div style="left:90px;top:663px;width:184px;height:17px;background:#2d2d2d;"></div><span id="t77" class="t" style="left:44px;top:662px;font-size:11.5px;line-height:18px;color:#e8e8e8;letter-spacing:0.125px;width:46px;overflow:hidden;">3145.72%</span><span id="t78" class="t" style="left:113px;top:662px;font-size:11.5px;line-height:18px;color:#b4b4b4;letter-spacing:-0.138px;">7 像素 x 13 像素 (96 ppi)</span><div style="left:260px;top:663px;width:14px;height:1px;background:#dcdcdc;"></div><svg style="left:263px;top:666px;" width="5" height="11" viewBox="0 0 5 11"><path d="M0.8 0.5L4.2 5.5L0.8 10.5" fill="none" stroke="#bdbdbd" stroke-width="1.1"/></svg><svg style="left:282px;top:667px;" width="5" height="9" viewBox="0 0 5 9"><path d="M4.2 0.5L0.8 4.5L4.2 8.5" fill="none" stroke="#8a8a8a" stroke-width="1.1"/></svg><svg style="left:987px;top:667px;" width="5" height="9" viewBox="0 0 5 9"><path d="M0.8 0.5L4.2 4.5L0.8 8.5" fill="none" stroke="#8a8a8a" stroke-width="1.1"/></svg><div style="left:516px;top:665px;width:342px;height:12px;background:#474747;"></div><div style="left:999px;top:81px;width:17px;height:582px;background:#2a2a2a;"></div><svg style="left:1004px;top:88px;" width="8" height="5" viewBox="0 0 8 5"><path d="M0.5 4.5L4 1L7.5 4.5" fill="none" stroke="#8a8a8a" stroke-width="1.1"/></svg><div style="left:1001px;top:241px;width:12px;height:110px;background:#454545;"></div><div style="left:1016px;top:61px;width:264px;height:620px;background:#1f1f1f;"></div><div style="left:1018px;top:61px;width:262px;height:12px;background:#252525;"></div><div style="left:1018px;top:73px;width:262px;height:16px;background:#262626;"></div><div style="left:1053px;top:73px;width:108px;height:16px;background:#2a2a2a;"></div><div style="left:1018px;top:72px;width:262px;height:1px;background:#212121;"></div><div style="left:1018px;top:89px;width:262px;height:591px;background:#323232;"></div><svg style="left:1266px;top:64px;" width="8" height="5" viewBox="0 0 8 5"><path d="M0.5 0.5L2.8 2.5L0.5 4.5M4.5 0.5L6.8 2.5L4.5 4.5" fill="none" stroke="#c8c8c8" stroke-width="1.1"/></svg><div style="left:1018px;top:73px;width:35px;height:17px;background:#323232;"></div><span id="t79" class="t" style="left:1025px;top:71px;font-size:11.5px;line-height:18px;color:#e6e6e6;letter-spacing:-0.500px;font-weight:bold;">图层</span><span id="t80" class="t" style="left:1060px;top:71px;font-size:11.5px;line-height:18px;color:#8f8f8f;letter-spacing:-0.500px;">通道</span><span id="t81" class="t" style="left:1096px;top:71px;font-size:11.5px;line-height:18px;color:#8f8f8f;letter-spacing:-0.500px;">动作</span><span id="t82" class="t" style="left:1132px;top:71px;font-size:11.5px;line-height:18px;color:#8f8f8f;letter-spacing:-0.500px;">属性</span><div style="left:1054px;top:73px;width:1px;height:16px;background:#2f2f2f;"></div><div style="left:1089px;top:73px;width:1px;height:16px;background:#2f2f2f;"></div><div style="left:1124px;top:73px;width:1px;height:16px;background:#2f2f2f;"></div><div style="left:1160px;top:73px;width:1px;height:16px;background:#2f2f2f;"></div><svg style="left:1264px;top:77px;" width="10" height="8" viewBox="0 0 10 8"><path d="M0 1h10M0 3.2h10M0 5.4h10M0 7.6h10" stroke="#9a9a9a" stroke-width="1"/></svg><div style="left:1018px;top:120.5px;width:262px;height:1px;background:#2b2b2b;"></div><div style="left:1022px;top:99px;width:86px;height:22px;background:#2a2a2a;border:1px solid #3d3d3d;border-radius:3px;"></div><svg style="left:1030px;top:104px;" width="11" height="12" viewBox="0 0 11 12"><circle cx="4.3" cy="4.3" r="3.3" fill="none" stroke="#e6e6e6" stroke-width="1.7"/><path d="M6.8 7L10 10.8" stroke="#e6e6e6" stroke-width="2.1"/></svg><span id="t83" class="t" style="left:1045px;top:100.5px;font-size:11.5px;line-height:18px;color:#6e6e6e;letter-spacing:-0.500px;text-decoration:underline;text-decoration-color:#555;">类型</span><svg style="left:1097px;top:108px;" width="7" height="4" viewBox="0 0 7 4"><path d="M0.5 0.5L3.5 4.0L6.5 0.5" fill="none" stroke="#555" stroke-width="1.1"/></svg><div style="left:1119px;top:97px;width:23px;height:22px;background:#1e1e1e;border-radius:3px;border:1px solid #393939;"></div><svg style="left:1124px;top:103px;" width="12" height="10" viewBox="0 0 13 11"><rect x="0.6" y="0.6" width="11.8" height="9.8" fill="none" stroke="#e6e6e6" stroke-width="1.2"/><path d="M2 8.6L4.6 4.6L6.4 7L8 5L10.8 8.6Z" fill="#e6e6e6"/></svg><svg style="left:1148.8px;top:102.8px;" width="11.4" height="11.4" viewBox="0 0 12 12"><circle cx="6" cy="6" r="5.2" fill="none" stroke="#d6d6d6" stroke-width="1.3"/><path d="M2.4 9.8A5.2 5.2 0 0 0 9.8 2.4Z" fill="#d6d6d6"/></svg><div style="left:1167px;top:97px;width:23px;height:22px;background:#1e1e1e;border-radius:3px;border:1px solid #393939;"></div><span id="t84" class="t" style="left:1173.6px;top:98.3px;font-size:14px;line-height:21px;color:#e6e6e6;font-family:'Liberation Serif',serif;letter-spacing:1.456px;font-weight:bold;-webkit-text-stroke:0.5px #e6e6e6;">T</span><svg style="left:1197px;top:103.4px;" width="11" height="11" viewBox="0 0 11 11"><rect x="1.5" y="1.5" width="8" height="8" fill="none" stroke="#e6e6e6" stroke-width="1.1"/><rect x="0.5" y="0.5" width="2" height="2" fill="#323232" stroke="#e6e6e6" stroke-width="1"/><rect x="0.5" y="8.5" width="2" height="2" fill="#323232" stroke="#e6e6e6" stroke-width="1"/><rect x="8.5" y="0.5" width="2" height="2" fill="#323232" stroke="#e6e6e6" stroke-width="1"/><rect x="8.5" y="8.5" width="2" height="2" fill="#323232" stroke="#e6e6e6" stroke-width="1"/></svg><svg style="left:1222px;top:103.3px;" width="10.2" height="11.8" viewBox="0 0 12 14"><path d="M3.6 5V0.6H8.2L11.4 3.8V12H7" fill="none" stroke="#e6e6e6" stroke-width="1.2"/><path d="M8 0.6V4H11.4" fill="none" stroke="#e6e6e6" stroke-width="1"/><rect x="0" y="6.4" width="6.6" height="7.2" fill="#e6e6e6"/></svg><div style="left:1248px;top:100px;width:10px;height:18px;border:1px solid #464646;border-radius:5px;background:#2a2a2a;"></div><svg style="left:1248px;top:100px;" width="10" height="10" viewBox="0 0 10 10"><circle cx="5.1" cy="4.6" r="4.15" fill="#f1592a"/></svg><div style="left:1018px;top:148.5px;width:262px;height:1px;background:#2b2b2b;"></div><div style="left:1022px;top:127px;width:117px;height:22px;background:#2a2a2a;border:1px solid #3d3d3d;border-radius:3px;"></div><span id="t85" class="t" style="left:1031px;top:130px;font-size:11.5px;line-height:18px;color:#8a8a8a;letter-spacing:-0.500px;">正常</span><svg style="left:1128px;top:137px;" width="7" height="4" viewBox="0 0 7 4"><path d="M0.5 0.5L3.5 4.0L6.5 0.5" fill="none" stroke="#555" stroke-width="1.1"/></svg><span id="t86" class="t" style="left:1146px;top:130px;font-size:12px;line-height:17px;color:#8a8a8a;letter-spacing:0.131px;">不透明度:</span><div style="left:1203px;top:127px;width:55px;height:21px;border:1px solid #444;border-radius:3px;background:#2a2a2a;"></div><div style="left:1241px;top:128px;width:1px;height:19px;background:#444;"></div><div style="left:1242px;top:128px;width:15px;height:19px;background:#303030;border-radius:0 2px 2px 0;"></div><span id="t87" class="t" style="left:1208px;top:129px;font-size:12px;line-height:17px;color:#767676;letter-spacing:-0.676px;">100%</span><svg style="left:1246px;top:136px;" width="7" height="4.5" viewBox="0 0 7 4.5"><path d="M0.5 0.5L3.5 4.0L6.5 0.5" fill="none" stroke="#c8c8c8" stroke-width="1.0"/></svg><span id="t88" class="t" style="left:1025px;top:159px;font-size:12px;line-height:17px;color:#6e6e6e;letter-spacing:0.219px;">锁定:</span><svg style="left:1062px;top:160px;" width="11" height="11" viewBox="0 0 11 11"><rect x="0.5" y="0.5" width="10" height="10" fill="none" stroke="#8e8e8e"/><rect x="1" y="1" width="3" height="3" fill="#8e8e8e"/><rect x="7" y="1" width="3" height="3" fill="#8e8e8e"/><rect x="4" y="4" width="3" height="3" fill="#8e8e8e"/><rect x="1" y="7" width="3" height="3" fill="#8e8e8e"/><rect x="7" y="7" width="3" height="3" fill="#8e8e8e"/></svg><svg style="left:1083px;top:159px;" width="14" height="14" viewBox="0 0 14 14"><path d="M12.4 0.6L13.9 0.1L14.2 1.7L8.7 9.8L5.9 7.7Z" fill="#8e8e8e"/><path d="M5.4 8.2L7.8 10C7.6 13 4 14.2 0.2 13.6C2.6 12.4 2.4 9.4 5.4 8.2Z" fill="#8e8e8e"/></svg><svg style="left:1105px;top:159px;" width="13" height="13" viewBox="0 0 16 16"><g fill="none" stroke="#d6d6d6" stroke-width="1.2"><path d="M8 1.5V14.5M1.5 8H14.5"/></g><path d="M8 0L10.8 3.4H5.2ZM8 16L10.8 12.6H5.2ZM0 8L3.4 5.2V10.8ZM16 8L12.6 5.2V10.8Z" fill="#d6d6d6"/></svg><svg style="left:1127px;top:160px;" width="14" height="14" viewBox="0 0 14 14"><path d="M3.2 0.6V13.6M0.4 3.2H8.6L11 5.6V13.6M0.4 11H13.6" fill="none" stroke="#d6d6d6" stroke-width="1.25"/><path d="M8.6 3.2V5.6H11" fill="none" stroke="#d6d6d6" stroke-width="0.9"/><path d="M11 0.4L11.8 1.6M13.6 3.2L12.4 3.4M12.9 1.1L12 2.2" stroke="#d6d6d6" stroke-width="0.9"/></svg><svg style="left:1151px;top:160px;" width="10" height="12" viewBox="0 0 10 12"><path d="M2.4 5.4V3.6A2.6 2.6 0 0 1 7.6 3.6V5.4" fill="none" stroke="#d6d6d6" stroke-width="1.5"/><rect x="0" y="5" width="10" height="7" fill="#d6d6d6"/><rect x="4.2" y="7.4" width="1.6" height="2" fill="#323232"/></svg><span id="t89" class="t" style="left:1170px;top:159.5px;font-size:12px;line-height:17px;color:#8a8a8a;letter-spacing:-0.115px;">填充:</span><div style="left:1203px;top:155.5px;width:55px;height:21px;border:1px solid #444;border-radius:3px;background:#2a2a2a;"></div><div style="left:1241px;top:156.5px;width:1px;height:19px;background:#444;"></div><div style="left:1242px;top:156.5px;width:15px;height:19px;background:#303030;border-radius:0 2px 2px 0;"></div><span id="t90" class="t" style="left:1208px;top:157.5px;font-size:12px;line-height:17px;color:#767676;letter-spacing:-0.676px;">100%</span><svg style="left:1246px;top:164.5px;" width="7" height="4.5" viewBox="0 0 7 4.5"><path d="M0.5 0.5L3.5 4.0L6.5 0.5" fill="none" stroke="#c8c8c8" stroke-width="1.0"/></svg><div style="left:1018px;top:183px;width:262px;height:476px;background:#2a2a2a;"></div><div style="left:1018px;top:183px;width:245px;height:175px;background:#323232;"></div><div style="left:1048px;top:183px;width:215px;height:87px;background:#4b4b4b;"></div><div style="left:1018px;top:270px;width:245px;height:1px;background:#2a2a2a;"></div><div style="left:1047px;top:183px;width:1px;height:175px;background:#2d2d2d;"></div><svg style="left:1027px;top:224px;" width="14" height="10" viewBox="0 0 14 10"><path d="M0 5C2.2 1.6 4.6 0.3 7 0.3S11.8 1.6 14 5C11.8 8.4 9.4 9.7 7 9.7S2.2 8.4 0 5Z" fill="#d6d6d6"/><circle cx="7" cy="4.6" r="3" fill="#323232"/><circle cx="6" cy="3.6" r="1" fill="#d6d6d6"/></svg><svg style="left:1050px;top:185px;" width="48" height="84" viewBox="0 0 48 84"><path d="M0.5 29V0.5H16M32 0.5H47.5V29M47.5 57V83.5H32M16 83.5H0.5V57" fill="none" stroke="#fff" stroke-width="1"/></svg><span id="t91" class="t" style="left:1067px;top:216px;font-size:20px;line-height:24px;color:#e0e0e0;font-family:'Liberation Serif',serif;letter-spacing:1.281px;-webkit-text-stroke:0.5px #e0e0e0;">T</span><span id="t92" class="t" style="left:1105.6px;top:220px;font-size:13.5px;line-height:17px;color:#e6e6e6;">/</span><div style="left:1052px;top:276px;width:45px;height:45px;background:#000;border:1px solid #5a5a5a;"></div><div style="left:1018px;top:659px;width:262px;height:21px;background:#323232;"></div><svg style="left:1077px;top:662px;" width="15" height="9" viewBox="0 0 15 9"><rect x="0.7" y="0.7" width="7" height="7.4" rx="3.5" fill="none" stroke="#5e5e5e" stroke-width="1.3"/><rect x="7.3" y="0.7" width="7" height="7.4" rx="3.5" fill="none" stroke="#5e5e5e" stroke-width="1.3"/><path d="M4.4 4.4H10.6" stroke="#5e5e5e" stroke-width="1.3"/></svg><span id="t93" class="t" style="left:1105.5px;top:656.5px;font-size:14.5px;line-height:18px;color:#c8c8c8;letter-spacing:0.109px;font-style:italic;">fx</span><svg style="left:1115px;top:672px;" width="4" height="2.5" viewBox="0 0 4 2.5"><path d="M0 0H4L2 2.5Z" fill="#e6e6e6"/></svg><svg style="left:1131px;top:661px;" width="13" height="10" viewBox="0 0 13 10"><rect width="13" height="10" fill="#d0d0d0"/><circle cx="6.5" cy="5" r="2.9" fill="#323232"/></svg><svg style="left:1160px;top:661px;" width="12" height="12" viewBox="0 0 12 12"><circle cx="6" cy="6" r="5.2" fill="none" stroke="#d0d0d0" stroke-width="1.3"/><path d="M2.4 9.8A5.2 5.2 0 0 0 9.8 2.4Z" fill="#d0d0d0"/></svg><svg style="left:1170px;top:672px;" width="4" height="2.5" viewBox="0 0 4 2.5"><path d="M0 0H4L2 2.5Z" fill="#e6e6e6"/></svg><svg style="left:1186px;top:661px;" width="13" height="10" viewBox="0 0 13 10"><path d="M0 1.8H12.5V10H0Z M0 1.8V0.3H4.6L5.4 1.8" fill="#d0d0d0"/></svg><svg style="left:1214px;top:661px;" width="11" height="11" viewBox="0 0 11 11"><rect x="0.6" y="0.6" width="9.8" height="9.8" fill="none" stroke="#d6d6d6" stroke-width="1.2"/><path d="M5.5 3V8M3 5.5H8" stroke="#d6d6d6" stroke-width="1.2"/></svg><svg style="left:1240px;top:661px;" width="11" height="12" viewBox="0 0 11 12"><path d="M0 2.4H11M3.6 2.2V0.6H7.4V2.2" fill="none" stroke="#d6d6d6" stroke-width="1.2"/><path d="M1.4 3.4L1.8 11.4H9.2L9.6 3.4" fill="none" stroke="#d6d6d6" stroke-width="1.2"/><path d="M3.8 4.4V10M5.5 4.4V10M7.2 4.4V10" stroke="#d6d6d6" stroke-width="0.9"/></svg><div style="left:1279px;top:25px;width:1px;height:655px;background:#222;"></div><div style="left:822px;top:302px;width:346px;height:356px;background:#323232;box-shadow:0 3px 14px 2px rgba(0,0,0,0.45);"></div><div style="left:822px;top:302px;width:346px;height:30px;background:#fff;"></div><span id="t94" class="t" style="left:830px;top:308.5px;font-size:12px;line-height:19px;color:#000;letter-spacing:-0.004px;">画布大小</span><svg style="left:1147.5px;top:310.5px;" width="11" height="11" viewBox="0 0 11 11"><path d="M0.5 0.5L10.5 10.5M10.5 0.5L0.5 10.5" stroke="#1a1a1a" stroke-width="1.1" fill="none"/></svg><div style="left:833px;top:350px;width:255px;height:59px;border:1px solid #272727;"></div><div style="left:833px;top:423px;width:255px;height:180px;border:1px solid #272727;"></div><div style="left:844px;top:345px;width:135px;height:10px;background:#323232;"></div><div style="left:844px;top:418px;width:135px;height:10px;background:#323232;"></div><span id="t95" class="t" style="left:853px;top:342px;font-size:12.5px;line-height:19px;color:#e6e6e6;letter-spacing:0.393px;">当前大小: 273 字节</span><span id="t96" class="t" style="left:853px;top:415px;font-size:12.5px;line-height:19px;color:#e6e6e6;letter-spacing:0.393px;">新建大小: 273 字节</span><span id="t97" class="t" style="left:901px;top:363px;font-size:12.5px;line-height:19px;color:#b4b4b4;letter-spacing:0.172px;">宽度:</span><span id="t98" class="t" style="left:901px;top:385px;font-size:12.5px;line-height:19px;color:#b4b4b4;letter-spacing:0.172px;">高度:</span><span id="t99" class="t" style="left:940.7px;top:363px;font-size:12.5px;line-height:19px;color:#b4b4b4;letter-spacing:0.216px;">7 像素</span><span id="t100" class="t" style="left:941px;top:385px;font-size:12.5px;line-height:19px;color:#b4b4b4;letter-spacing:-0.178px;">13 像素</span><div style="left:1104px;top:348px;width:53px;height:26px;border:2px solid #b4b4b4;border-radius:13px;"></div><span id="t101" class="t" style="left:1118px;top:353px;font-size:12.5px;line-height:19px;color:#f0f0f0;letter-spacing:0.242px;">确定</span><div style="left:1104px;top:382px;width:53px;height:26px;border:2px solid #6a6a6a;border-radius:13px;"></div><span id="t102" class="t" style="left:1118px;top:387px;font-size:12.5px;line-height:19px;color:#f0f0f0;letter-spacing:0.242px;">复位</span><span id="t103" class="t" style="left:879.7px;top:439px;font-size:12.5px;line-height:19px;color:#b4b4b4;letter-spacing:0.232px;">宽度(W):</span><span id="t104" class="t" style="left:882.5px;top:469.5px;font-size:12.5px;line-height:19px;color:#b4b4b4;letter-spacing:0.195px;">高度(H):</span><div style="left:936px;top:437px;width:69px;height:22.5px;background:#262626;border:1px solid #4a4a4a;"></div><div style="left:936px;top:468px;width:69px;height:22.5px;background:#262626;border:1px solid #4a4a4a;"></div><span id="t105" class="t" style="left:940.5px;top:439px;font-size:12.5px;line-height:19px;color:#ececec;letter-spacing:-0.953px;">7</span><span id="t106" class="t" style="left:940.5px;top:469.5px;font-size:12.5px;line-height:19px;color:#ececec;letter-spacing:-0.453px;">13</span><div style="left:1009px;top:438px;width:69px;height:22.5px;background:#292929;border:1.5px solid #1a6fe0;border-radius:3.5px;"></div><span id="t107" class="t" style="left:1020px;top:440.5px;font-size:12.5px;line-height:19.5px;color:#e6e6e6;letter-spacing:-0.258px;">像素</span><svg style="left:1066.5px;top:448.25px;" width="7" height="4.5" viewBox="0 0 7 4.5"><path d="M0.5 0.5L3.5 4.0L6.5 0.5" fill="none" stroke="#b4b4b4" stroke-width="1.0"/></svg><div style="left:1009px;top:469px;width:69px;height:22.5px;background:#292929;border:1px solid #474747;border-radius:3.5px;"></div><span id="t108" class="t" style="left:1020px;top:471.5px;font-size:12.5px;line-height:19.5px;color:#e6e6e6;letter-spacing:-0.258px;">像素</span><svg style="left:1066.5px;top:479.25px;" width="7" height="4.5" viewBox="0 0 7 4.5"><path d="M0.5 0.5L3.5 4.0L6.5 0.5" fill="none" stroke="#b4b4b4" stroke-width="1.0"/></svg><div style="left:919px;top:501px;width:12.5px;height:12.5px;border:1px solid #5a5a5a;border-radius:2.5px;background:#2c2c2c;"></div><span id="t109" class="t" style="left:940px;top:498.5px;font-size:12.5px;line-height:19px;color:#e6e6e6;letter-spacing:-0.172px;">相对(R)</span><span id="t110" class="t" style="left:900.5px;top:525px;font-size:12.5px;line-height:19px;color:#b4b4b4;letter-spacing:0.339px;">定位:</span><svg style="left:940px;top:525px;" width="71" height="71" viewBox="0 0 71 71"><rect x="0.5" y="0.5" width="69.5" height="69.5" fill="#323232" stroke="#7a7a7a"/><path d="M23.5 0.5V70M46.8 0.5V70M0.5 23.6H70M0.5 46.9H70" stroke="#7a7a7a" fill="none"/><g transform="translate(12 12) rotate(-45)"><path d="M0 9.4V0" stroke="#dcdcdc" stroke-width="1.1"/><path d="M0 -9.6L3.8 1.2H-3.8Z" fill="#dcdcdc"/></g><g transform="translate(35.2 12) rotate(0)"><path d="M0 9.4V0" stroke="#dcdcdc" stroke-width="1.1"/><path d="M0 -9.6L3.8 1.2H-3.8Z" fill="#dcdcdc"/></g><g transform="translate(58.4 12) rotate(45)"><path d="M0 9.4V0" stroke="#dcdcdc" stroke-width="1.1"/><path d="M0 -9.6L3.8 1.2H-3.8Z" fill="#dcdcdc"/></g><g transform="translate(12 35.2) rotate(-90)"><path d="M0 9.4V0" stroke="#dcdcdc" stroke-width="1.1"/><path d="M0 -9.6L3.8 1.2H-3.8Z" fill="#dcdcdc"/></g><g transform="translate(58.4 35.2) rotate(90)"><path d="M0 9.4V0" stroke="#dcdcdc" stroke-width="1.1"/><path d="M0 -9.6L3.8 1.2H-3.8Z" fill="#dcdcdc"/></g><g transform="translate(12 58.4) rotate(-135)"><path d="M0 9.4V0" stroke="#dcdcdc" stroke-width="1.1"/><path d="M0 -9.6L3.8 1.2H-3.8Z" fill="#dcdcdc"/></g><g transform="translate(35.2 58.4) rotate(180)"><path d="M0 9.4V0" stroke="#dcdcdc" stroke-width="1.1"/><path d="M0 -9.6L3.8 1.2H-3.8Z" fill="#dcdcdc"/></g><g transform="translate(58.4 58.4) rotate(135)"><path d="M0 9.4V0" stroke="#dcdcdc" stroke-width="1.1"/><path d="M0 -9.6L3.8 1.2H-3.8Z" fill="#dcdcdc"/></g><circle cx="35.2" cy="35.2" r="3.2" fill="#dcdcdc"/></svg><span id="t111" class="t" style="left:848px;top:622px;font-size:12.5px;line-height:19px;color:#7a7a7a;letter-spacing:0.502px;">画布扩展颜色:</span><div style="left:936px;top:619.5px;width:93.5px;height:22px;background:#292929;border:1px solid #474747;border-radius:3.5px;"></div><span id="t112" class="t" style="left:945.5px;top:622.0px;font-size:12.5px;line-height:19px;color:#7a7a7a;letter-spacing:-0.258px;">背景</span><svg style="left:1018.0px;top:629.5px;" width="7" height="4.5" viewBox="0 0 7 4.5"><path d="M0.5 0.5L3.5 4.0L6.5 0.5" fill="none" stroke="#5c5c5c" stroke-width="1.0"/></svg><div style="left:1035px;top:622.5px;width:16px;height:15.5px;border:1px solid #1c1c1c;background:#333;"></div><div style="left:0px;top:680px;width:1280px;height:40px;background:linear-gradient(90deg,#011a26 0%,#021623 50%,#03122a 100%);"></div><svg style="left:16px;top:692px;" width="16" height="16" viewBox="0 0 16 16"><path d="M0 2.3L6.6 1.4V7.6H0ZM7.4 1.3L16 0V7.6H7.4ZM0 8.4H6.6V14.6L0 13.7ZM7.4 8.4H16V16L7.4 14.7Z" fill="#fff"/></svg><svg style="left:63px;top:691.6px;" width="17" height="16" viewBox="0 0 17 16"><rect x="1.6" y="4.9" width="9.6" height="6" fill="none" stroke="#fff" stroke-width="1.4"/><path d="M1.5 2.6V1H11.3V2.6M1.5 13.4V15H11.3V13.4" fill="none" stroke="#fff" stroke-width="1.3"/><path d="M15.6 0.4V3.6M15.6 8.4V15.4" stroke="#fff" stroke-width="1.4"/><rect x="14.2" y="4.4" width="2.8" height="3" fill="#fff"/></svg><svg style="left:110px;top:688px;" width="26" height="25" viewBox="0 0 26 25"><defs><linearGradient id="gs" x1="0" y1="0" x2="1" y2="1"><stop offset="0" stop-color="#7fd0fb"/><stop offset="0.5" stop-color="#4db8f5"/><stop offset="1" stop-color="#33aef3"/></linearGradient></defs><rect x="4.4" y="1.6" width="20.4" height="14.4" fill="url(#gs)" stroke="#2f9fe6" stroke-width="0.8"/><circle cx="6" cy="14.2" r="4.6" fill="#9ed5f5" fill-opacity="0.7" stroke="#b4b4b4" stroke-width="1.3"/><path d="M9.4 17.8L15.2 23.2" stroke="#8c8c8c" stroke-width="2" stroke-linecap="round"/></svg><svg style="left:159px;top:687px;" width="26" height="26" viewBox="0 0 26 26"><path d="M6 2L23 1.2L21.4 16.4L5 15.4Z" fill="#2f57c9" stroke="#c9d3e6" stroke-width="1.2"/><path d="M7 3L15 2.6L9 9Z" fill="#0a1fb0"/><rect x="0.6" y="5.4" width="15.6" height="6.4" fill="#8fb7ea" stroke="#dfe9f7" stroke-width="1"/><path d="M2 7.4H15M2 9.6H15" stroke="#2c56b8" stroke-width="1" stroke-dasharray="1.4 0.8"/><path d="M11 16L15 16.4V19.6H11Z" fill="#bdbdbd"/><ellipse cx="12.6" cy="21.6" rx="5.8" ry="2.4" fill="#d9d9d9" stroke="#9a9a9a" stroke-width="0.6"/></svg><div style="left:197px;top:680px;width:48px;height:40px;background:#34404d;"></div><div style="left:197px;top:718px;width:48px;height:2px;background:#76b9ed;"></div><div style="left:250px;top:718px;width:40px;height:2px;background:#76b9ed;"></div><div style="left:299px;top:718px;width:40px;height:2px;background:#76b9ed;"></div><div style="left:210px;top:688px;width:22px;height:22px;background:#001e36;border-radius:4px;"></div><span id="t113" class="t" style="left:213.5px;top:690px;font-size:13.5px;line-height:19px;color:#31a8ff;letter-spacing:-0.858px;font-weight:bold;">Ps</span><svg style="left:258.6px;top:689.6px;" width="22" height="22" viewBox="0 0 22 22"><path d="M1 2.4C1 1.6 1.6 1.2 2.2 1.2H8.4L10.2 3.4H1Z" fill="#e0a419"/><path d="M1 3.2H20C20.8 3.2 21.2 3.8 21.2 4.4V17.6C21.2 18.4 20.6 18.8 20 18.8H2.2C1.4 18.8 1 18.2 1 17.6Z" fill="#f9d262"/><path d="M1 3.2H10.6L9.4 5H1Z" fill="#f4b400" opacity="0.5"/><path d="M5 11.8H17.2V19.6H5Z" fill="#3a94d9"/><path d="M7.8 14.6H14.4V19.6H7.8Z" fill="#f9d262"/><path d="M5 11.8H17.2V13.4H5Z" fill="#56b4f1"/></svg><svg style="left:307.25px;top:688.4px;" width="23" height="23" viewBox="0 0 23 23"><circle cx="11.5" cy="11.5" r="11.2" fill="#1488e6"/><circle cx="11.5" cy="11.5" r="11.2" fill="none" stroke="#0b6fd0" stroke-width="0.6"/><path d="M9.4 3.8L13.6 10.4L17 10.8L14.4 19.4L10 12.8L6.4 12.4Z" fill="#fff"/></svg><svg style="left:1022px;top:697px;" width="12" height="7" viewBox="0 0 12 7"><path d="M0.7 6.3L6 1L11.3 6.3" fill="none" stroke="#fff" stroke-width="1.3"/></svg><svg style="left:1043px;top:692px;" width="18" height="16" viewBox="0 0 18 16"><path d="M0.7 5.6H3.4L7.2 2V14L3.4 10.4H0.7Z" fill="none" stroke="#fff" stroke-width="1.2" stroke-linejoin="round"/><path d="M9.6 5.6C10.6 7 10.6 9 9.6 10.4M12 3.6C13.8 6 13.8 10 12 12.4M14.6 1.4C17.4 5 17.4 11 14.6 14.6" fill="none" stroke="#fff" stroke-width="1.1"/></svg><svg style="left:1068px;top:694px;" width="24" height="13" viewBox="0 0 24 13"><rect x="0.7" y="0.7" width="22" height="11.6" rx="1" fill="none" stroke="#fff" stroke-width="1.3"/><path d="M3.4 4H20.4M3.4 6.4H20.4" stroke="#fff" stroke-width="1.2" stroke-dasharray="1.4 1"/><path d="M5.6 9.2H18" stroke="#fff" stroke-width="1.3"/><path d="M3.4 9.2H4.6M19.2 9.2H20.4" stroke="#fff" stroke-width="1.2"/></svg><span id="t114" class="t" style="left:1098px;top:689px;font-size:16px;line-height:22px;color:#fff;letter-spacing:-0.016px;">英</span><div style="left:1129px;top:693px;width:14px;height:14px;background:#fff;"></div><span id="t115" class="t" style="left:1130px;top:693.5px;font-size:12px;line-height:15px;color:#04112b;letter-spacing:-0.016px;font-weight:bold;">拼</span><span id="t116" class="t" style="left:1178px;top:683.3px;font-size:12px;line-height:17px;color:#fff;letter-spacing:0.285px;">9:32</span><span id="t117" class="t" style="left:1161.3px;top:702.8px;font-size:12px;line-height:17px;color:#fff;letter-spacing:0.512px;">2023/10/3</span><svg style="left:1239.4px;top:692px;" width="24" height="24" viewBox="0 0 24 24"><path d="M0.4 0.4H15.6V12.2H7L3.6 15.4V12.2H0.4Z" fill="#fff"/><path d="M3 3.6H13M3 6.2H13M3 8.8H13" stroke="#04112b" stroke-width="1.2"/><circle cx="15.2" cy="15.5" r="7.4" fill="#4a4f58" stroke="#6d727b" stroke-width="1.2"/><text x="15.2" y="19.6" text-anchor="middle" font-family="Liberation Sans,sans-serif" font-size="11.5" font-weight="bold" fill="#fff">1</text></svg><div style="left:1275.5px;top:680px;width:1px;height:40px;background:#5a6470;"></div></div>
<svg class="ov" style="left:0;top:0" width="2560" height="720" viewBox="0 0 2560 720"><rect x="428.5" y="253.5" width="148" height="247" fill="none" stroke="#00ff24" stroke-width="3"/><rect x="851.5" y="401.5" width="235" height="102" fill="none" stroke="#00ff24" stroke-width="3"/><rect x="1455.5" y="134.5" width="342" height="532" fill="none" stroke="#00ff24" stroke-width="3"/><rect x="2130.5" y="407.5" width="243" height="100" fill="none" stroke="#00ff24" stroke-width="3"/><path d="M796.2 178L1381 181.9" stroke="#00ff24" stroke-width="6.5" stroke-linecap="round"/><path d="M1377.2 171L1400.6 182.1L1377 192.3L1380.6 182Z" fill="#00ff24"/></svg></body></html>
